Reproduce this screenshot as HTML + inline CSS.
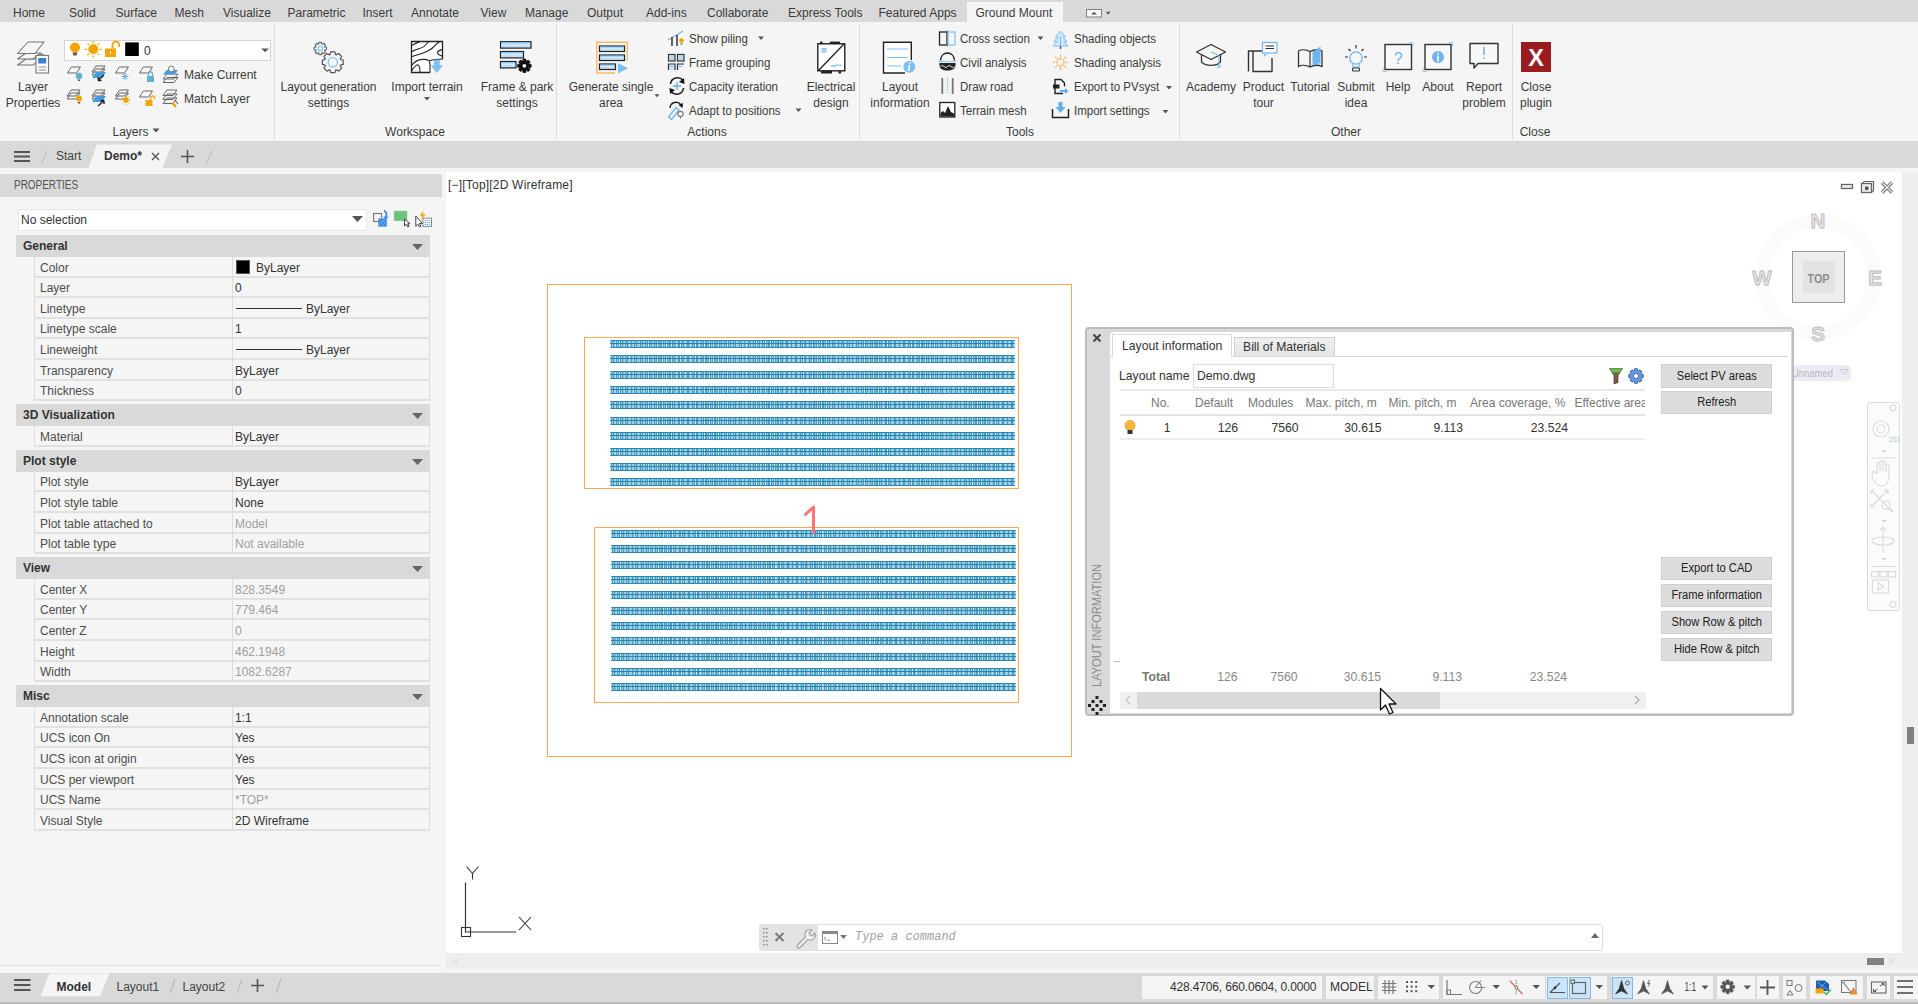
<!DOCTYPE html><html><head><meta charset="utf-8"><style>
html,body{margin:0;padding:0;width:1918px;height:1004px;overflow:hidden;background:#f5f5f5;}
body{position:relative;font-family:"Liberation Sans",sans-serif;}
.t{position:absolute;white-space:pre;line-height:14px;}
.r{position:absolute;}
svg.r{overflow:visible}
</style></head><body>
<div class="r" style="left:0px;top:0px;width:1918px;height:22px;background:#d9d9d9"></div>
<div class="r" style="left:967px;top:2px;width:96px;height:20px;background:#f5f5f5"></div>
<div class="t " style="left:13px;top:6px;font-size:12px;color:#3b3b3b;font-weight:normal;">Home</div>
<div class="t " style="left:69px;top:6px;font-size:12px;color:#3b3b3b;font-weight:normal;">Solid</div>
<div class="t " style="left:115.5px;top:6px;font-size:12px;color:#3b3b3b;font-weight:normal;">Surface</div>
<div class="t " style="left:174.5px;top:6px;font-size:12px;color:#3b3b3b;font-weight:normal;">Mesh</div>
<div class="t " style="left:223px;top:6px;font-size:12px;color:#3b3b3b;font-weight:normal;">Visualize</div>
<div class="t " style="left:287.5px;top:6px;font-size:12px;color:#3b3b3b;font-weight:normal;">Parametric</div>
<div class="t " style="left:362.5px;top:6px;font-size:12px;color:#3b3b3b;font-weight:normal;">Insert</div>
<div class="t " style="left:411px;top:6px;font-size:12px;color:#3b3b3b;font-weight:normal;">Annotate</div>
<div class="t " style="left:480.5px;top:6px;font-size:12px;color:#3b3b3b;font-weight:normal;">View</div>
<div class="t " style="left:525px;top:6px;font-size:12px;color:#3b3b3b;font-weight:normal;">Manage</div>
<div class="t " style="left:587px;top:6px;font-size:12px;color:#3b3b3b;font-weight:normal;">Output</div>
<div class="t " style="left:646px;top:6px;font-size:12px;color:#3b3b3b;font-weight:normal;">Add-ins</div>
<div class="t " style="left:707px;top:6px;font-size:12px;color:#3b3b3b;font-weight:normal;">Collaborate</div>
<div class="t " style="left:788px;top:6px;font-size:12px;color:#3b3b3b;font-weight:normal;">Express Tools</div>
<div class="t " style="left:878.5px;top:6px;font-size:12px;color:#3b3b3b;font-weight:normal;">Featured Apps</div>
<div class="t " style="left:975.5px;top:6px;font-size:12px;color:#3b3b3b;font-weight:normal;">Ground Mount</div>
<svg class="r" style="left:1086px;top:8px" width="26" height="12" viewBox="0 0 26 12"><rect x="0.5" y="1.5" width="15" height="7.5" fill="#f8f8f8" stroke="#777" stroke-width="0.9"/><path d="M5 6.5 L8 3.8 L11 6.5Z" fill="#555"/><path d="M20 3.8 L24.5 3.8 L22.2 6.8Z" fill="#555"/></svg>
<div class="r" style="left:0px;top:22px;width:1918px;height:119px;background:#f5f5f5"></div>
<div class="r" style="left:273.5px;top:24px;width:1px;height:116px;background:#dcdcdc"></div>
<div class="r" style="left:556px;top:24px;width:1px;height:116px;background:#dcdcdc"></div>
<div class="r" style="left:859px;top:24px;width:1px;height:116px;background:#dcdcdc"></div>
<div class="r" style="left:1179px;top:24px;width:1px;height:116px;background:#dcdcdc"></div>
<div class="r" style="left:1512px;top:24px;width:1px;height:116px;background:#dcdcdc"></div>
<div class="t" style="left:-117px;width:300px;text-align:center;top:79.6px;font-size:12px;color:#3b3b3b;font-weight:normal;">Layer</div>
<div class="t" style="left:-117px;width:300px;text-align:center;top:96.2px;font-size:12px;color:#3b3b3b;font-weight:normal;">Properties</div>
<div class="t" style="left:178.5px;width:300px;text-align:center;top:79.6px;font-size:12px;color:#3b3b3b;font-weight:normal;">Layout generation</div>
<div class="t" style="left:178.5px;width:300px;text-align:center;top:96.2px;font-size:12px;color:#3b3b3b;font-weight:normal;">settings</div>
<div class="t" style="left:277px;width:300px;text-align:center;top:79.6px;font-size:12px;color:#3b3b3b;font-weight:normal;">Import terrain</div>
<div class="t" style="left:367px;width:300px;text-align:center;top:79.6px;font-size:12px;color:#3b3b3b;font-weight:normal;">Frame &amp; park</div>
<div class="t" style="left:367px;width:300px;text-align:center;top:96.2px;font-size:12px;color:#3b3b3b;font-weight:normal;">settings</div>
<div class="t" style="left:461px;width:300px;text-align:center;top:79.6px;font-size:12px;color:#3b3b3b;font-weight:normal;">Generate single</div>
<div class="t" style="left:461px;width:300px;text-align:center;top:96.2px;font-size:12px;color:#3b3b3b;font-weight:normal;">area</div>
<div class="t" style="left:681px;width:300px;text-align:center;top:79.6px;font-size:12px;color:#3b3b3b;font-weight:normal;">Electrical</div>
<div class="t" style="left:681px;width:300px;text-align:center;top:96.2px;font-size:12px;color:#3b3b3b;font-weight:normal;">design</div>
<div class="t" style="left:750px;width:300px;text-align:center;top:79.6px;font-size:12px;color:#3b3b3b;font-weight:normal;">Layout</div>
<div class="t" style="left:750px;width:300px;text-align:center;top:96.2px;font-size:12px;color:#3b3b3b;font-weight:normal;">information</div>
<div class="t" style="left:1061px;width:300px;text-align:center;top:79.6px;font-size:12px;color:#3b3b3b;font-weight:normal;">Academy</div>
<div class="t" style="left:1113.5px;width:300px;text-align:center;top:79.6px;font-size:12px;color:#3b3b3b;font-weight:normal;">Product</div>
<div class="t" style="left:1113.5px;width:300px;text-align:center;top:96.2px;font-size:12px;color:#3b3b3b;font-weight:normal;">tour</div>
<div class="t" style="left:1160px;width:300px;text-align:center;top:79.6px;font-size:12px;color:#3b3b3b;font-weight:normal;">Tutorial</div>
<div class="t" style="left:1206px;width:300px;text-align:center;top:79.6px;font-size:12px;color:#3b3b3b;font-weight:normal;">Submit</div>
<div class="t" style="left:1206px;width:300px;text-align:center;top:96.2px;font-size:12px;color:#3b3b3b;font-weight:normal;">idea</div>
<div class="t" style="left:1248px;width:300px;text-align:center;top:79.6px;font-size:12px;color:#3b3b3b;font-weight:normal;">Help</div>
<div class="t" style="left:1288px;width:300px;text-align:center;top:79.6px;font-size:12px;color:#3b3b3b;font-weight:normal;">About</div>
<div class="t" style="left:1334px;width:300px;text-align:center;top:79.6px;font-size:12px;color:#3b3b3b;font-weight:normal;">Report</div>
<div class="t" style="left:1334px;width:300px;text-align:center;top:96.2px;font-size:12px;color:#3b3b3b;font-weight:normal;">problem</div>
<div class="t" style="left:1386px;width:300px;text-align:center;top:79.6px;font-size:12px;color:#3b3b3b;font-weight:normal;">Close</div>
<div class="t" style="left:1386px;width:300px;text-align:center;top:96.2px;font-size:12px;color:#3b3b3b;font-weight:normal;">plugin</div>
<div class="t" style="left:-19.5px;width:300px;text-align:center;top:124.8px;font-size:12px;color:#3b3b3b;font-weight:normal;">Layers</div>
<div class="t" style="left:265px;width:300px;text-align:center;top:124.8px;font-size:12px;color:#3b3b3b;font-weight:normal;">Workspace</div>
<div class="t" style="left:557px;width:300px;text-align:center;top:124.8px;font-size:12px;color:#3b3b3b;font-weight:normal;">Actions</div>
<div class="t" style="left:870px;width:300px;text-align:center;top:124.8px;font-size:12px;color:#3b3b3b;font-weight:normal;">Tools</div>
<div class="t" style="left:1196px;width:300px;text-align:center;top:124.8px;font-size:12px;color:#3b3b3b;font-weight:normal;">Other</div>
<div class="t" style="left:1385px;width:300px;text-align:center;top:124.8px;font-size:12px;color:#3b3b3b;font-weight:normal;">Close</div>
<div class="t " style="left:184px;top:67.8px;font-size:12px;color:#3b3b3b;font-weight:normal;">Make Current</div>
<div class="t " style="left:184px;top:91.6px;font-size:12px;color:#3b3b3b;font-weight:normal;">Match Layer</div>
<div class="t " style="left:688.5px;top:32.2px;font-size:12px;color:#3b3b3b;font-weight:normal;transform:scaleX(0.96);transform-origin:0 0">Show piling</div>
<div class="t " style="left:688.5px;top:56.099999999999994px;font-size:12px;color:#3b3b3b;font-weight:normal;transform:scaleX(0.96);transform-origin:0 0">Frame grouping</div>
<div class="t " style="left:688.5px;top:80.1px;font-size:12px;color:#3b3b3b;font-weight:normal;transform:scaleX(0.96);transform-origin:0 0">Capacity iteration</div>
<div class="t " style="left:688.5px;top:104.3px;font-size:12px;color:#3b3b3b;font-weight:normal;transform:scaleX(0.96);transform-origin:0 0">Adapt to positions</div>
<div class="t " style="left:960px;top:32.2px;font-size:12px;color:#3b3b3b;font-weight:normal;transform:scaleX(0.96);transform-origin:0 0">Cross section</div>
<div class="t " style="left:960px;top:56.099999999999994px;font-size:12px;color:#3b3b3b;font-weight:normal;transform:scaleX(0.96);transform-origin:0 0">Civil analysis</div>
<div class="t " style="left:960px;top:80.1px;font-size:12px;color:#3b3b3b;font-weight:normal;transform:scaleX(0.96);transform-origin:0 0">Draw road</div>
<div class="t " style="left:960px;top:104.3px;font-size:12px;color:#3b3b3b;font-weight:normal;transform:scaleX(0.96);transform-origin:0 0">Terrain mesh</div>
<div class="t " style="left:1073.5px;top:32.2px;font-size:12px;color:#3b3b3b;font-weight:normal;transform:scaleX(0.96);transform-origin:0 0">Shading objects</div>
<div class="t " style="left:1073.5px;top:56.099999999999994px;font-size:12px;color:#3b3b3b;font-weight:normal;transform:scaleX(0.96);transform-origin:0 0">Shading analysis</div>
<div class="t " style="left:1073.5px;top:80.1px;font-size:12px;color:#3b3b3b;font-weight:normal;transform:scaleX(0.96);transform-origin:0 0">Export to PVsyst</div>
<div class="t " style="left:1073.5px;top:104.3px;font-size:12px;color:#3b3b3b;font-weight:normal;transform:scaleX(0.96);transform-origin:0 0">Import settings</div>
<div class="r" style="left:63.5px;top:39.5px;width:207.5px;height:21px;background:#fff;border:1px solid #d4d4d4;box-sizing:border-box"></div>
<div class="t " style="left:144px;top:43.5px;font-size:12px;color:#333;font-weight:normal;">0</div>
<svg class="r" style="left:0;top:0" width="1918" height="141" viewBox="0 0 1918 141"><g fill="#f5f5f5" stroke="#777" stroke-width="1.1" stroke-linejoin="round"><path d="M17.5 65 L26 59 H41 L33 65Z"/><path d="M17.5 59 L26 53 H41 L33 59Z"/><path d="M17.5 53.5 L28 42 H44 L35 53.5Z"/></g><rect x="36" y="55.5" width="12.5" height="17.5" fill="#fff" stroke="#777" stroke-width="1.1"/><rect x="38.2" y="58" width="8" height="5.5" fill="#3a7fd8"/><path d="M38.5 67 H46 M38.5 70 H46" stroke="#888" stroke-width="1"/><rect x="39" y="53.8" width="5" height="2" fill="#888"/><circle cx="75" cy="47.5" r="5" fill="#f5a300"/><path d="M72.5 52.5 H77.5 L76.5 55.5 H73.5Z" fill="#555"/><circle cx="93.3" cy="49.3" r="5" fill="#f5a300"/><g stroke="#f5a300" stroke-width="1.2"><path d="M93.3 41 V43.2 M93.3 55.4 V57.6 M85 49.3 H87.2 M99.4 49.3 H101.6 M87.4 43.4 L88.9 44.9 M97.7 53.7 L99.2 55.2 M87.4 55.2 L88.9 53.7 M97.7 44.9 L99.2 43.4"/></g><rect x="105" y="48.5" width="11" height="8.5" fill="#f5a300"/><path d="M112.5 48.5 V45 a3.3 3.3 0 0 1 6.6 0 V47" fill="none" stroke="#f5a300" stroke-width="1.8"/><rect x="110" y="51" width="1" height="3" fill="#fff"/><rect x="125.2" y="42.4" width="13.6" height="13.6" fill="#000"/><path d="M261.3 48.5 h7.6 l-3.8 3.8z" fill="#555"/><path d="M67.5 73 L71.5 67 H80.5 L76.5 73Z" fill="none" stroke="#666" stroke-width="1"/><circle cx="79" cy="76" r="3.2" fill="#5fb3cf"/><path d="M77.5 79.5 H80.5 L80 81 H78Z" fill="#555"/><path d="M92 72 L96 66 H105 L101 72Z" fill="none" stroke="#666" stroke-width="1"/><path d="M92 75 L96 69 H105 L101 75Z" fill="none" stroke="#666" stroke-width="1"/><path d="M92 78 L96 72 H106 L102 78Z" fill="#4a9be0"/><path d="M104 75 L98 80.5 M98 80.5 L101.5 80.5 M98 80.5 L98.5 77" stroke="#222" stroke-width="1.4"/><path d="M115.5 73 L119.5 67 H128.5 L124.5 73Z" fill="none" stroke="#666" stroke-width="1"/><g stroke="#5fb3cf" stroke-width="1"><path d="M125 73 V80 M121.5 76.5 H128.5 M122.5 74 L127.5 79 M127.5 74 L122.5 79"/></g><path d="M139.5 73 L143.5 67 H152.5 L148.5 73Z" fill="none" stroke="#666" stroke-width="1"/><rect x="147" y="76" width="7" height="6" fill="#5fb3cf"/><path d="M148.5 76 V74 a2 2 0 0 1 4 0 V76" fill="none" stroke="#5fb3cf" stroke-width="1.3"/><path d="M163 79 L167 74 H178 L174 79Z" fill="none" stroke="#666" stroke-width="1"/><path d="M163 82.5 L167 77.5 H178 L174 82.5Z" fill="none" stroke="#666" stroke-width="1"/><path d="M163 74.5 L166.5 70 H178 L174.5 74.5Z" fill="#4a9be0"/><circle cx="171.3" cy="69" r="2.9" fill="#f5f5f5" stroke="#777" stroke-width="1"/><path d="M67 96 L71 90 H80 L76 96Z" fill="none" stroke="#666" stroke-width="1"/><path d="M67 99 L71 93 H80 L76 99Z" fill="none" stroke="#666" stroke-width="1"/><circle cx="79" cy="98.5" r="3" fill="#f5a300"/><path d="M77.5 102 H80.5 L80 103.5 H78Z" fill="#555"/><path d="M92 96 L96 90 H105 L101 96Z" fill="none" stroke="#666" stroke-width="1"/><path d="M92 99 L96 93 H105 L101 99Z" fill="none" stroke="#666" stroke-width="1"/><path d="M92 102 L96 96 H106 L102 102Z" fill="#4a9be0"/><path d="M98 106 L104 100.5 M104 100.5 H100.5 M104 100.5 V104" stroke="#222" stroke-width="1.4"/><path d="M115.5 96 L119.5 90 H128.5 L124.5 96Z" fill="none" stroke="#666" stroke-width="1"/><path d="M115.5 99 L119.5 93 H128.5 L124.5 99Z" fill="none" stroke="#666" stroke-width="1"/><circle cx="126" cy="100" r="2.8" fill="#f5a300"/><g stroke="#f5a300" stroke-width="0.9"><path d="M126 95 V96.3 M126 103.7 V105 M121 100 H122.3 M129.7 100 H131 M122.5 96.5 L123.4 97.4 M128.6 102.6 L129.5 103.5 M122.5 103.5 L123.4 102.6 M128.6 97.4 L129.5 96.5"/></g><path d="M139.5 97 L143.5 91 H152.5 L148.5 97Z" fill="none" stroke="#666" stroke-width="1"/><rect x="145.5" y="100" width="7" height="6" fill="#f5a300"/><path d="M150.5 100 V98 a2 2 0 0 1 4 0 V99" fill="none" stroke="#f5a300" stroke-width="1.3"/><path d="M163 95.5 L167 90 H177 L173 95.5Z" fill="none" stroke="#666" stroke-width="1"/><path d="M163 99.5 L167 94 H177 L173 99.5Z" fill="none" stroke="#666" stroke-width="1"/><path d="M163 103.5 L167 98 H177 L173 103.5Z" fill="none" stroke="#666" stroke-width="1"/><path d="M172.5 103 L176 107" stroke="#f5a300" stroke-width="2.5"/><path d="M175 100 L178 104" stroke="#444" stroke-width="1"/><path d="M324.62 46.91 L326.47 47.24 L326.47 49.76 L324.62 50.09 L324.47 50.43 L325.55 51.98 L323.78 53.75 L322.23 52.67 L321.89 52.82 L321.56 54.67 L319.04 54.67 L318.71 52.82 L318.37 52.67 L316.82 53.75 L315.05 51.98 L316.13 50.43 L315.98 50.09 L314.13 49.76 L314.13 47.24 L315.98 46.91 L316.13 46.57 L315.05 45.02 L316.82 43.25 L318.37 44.33 L318.71 44.18 L319.04 42.33 L321.56 42.33 L321.89 44.18 L322.23 44.33 L323.78 43.25 L325.55 45.02 L324.47 46.57Z" fill="#f5f5f5" stroke="#666" stroke-width="1.1" stroke-linejoin="round"/><circle cx="320.3" cy="48.5" r="2.3" fill="none" stroke="#7cc0f5" stroke-width="1.1"/><path d="M340.50 59.47 L343.19 60.18 L343.19 64.42 L340.50 65.13 L340.24 65.74 L341.64 68.15 L338.65 71.14 L336.24 69.74 L335.63 70.00 L334.92 72.69 L330.68 72.69 L329.97 70.00 L329.36 69.74 L326.95 71.14 L323.96 68.15 L325.36 65.74 L325.10 65.13 L322.41 64.42 L322.41 60.18 L325.10 59.47 L325.36 58.86 L323.96 56.45 L326.95 53.46 L329.36 54.86 L329.97 54.60 L330.68 51.91 L334.92 51.91 L335.63 54.60 L336.24 54.86 L338.65 53.46 L341.64 56.45 L340.24 58.86Z" fill="#f5f5f5" stroke="#555" stroke-width="1.2" stroke-linejoin="round"/><circle cx="332.8" cy="62.3" r="4.6" fill="none" stroke="#7cc0f5" stroke-width="1.3"/><path d="M430 72.5 H411.5 V41.5 H442.5 V59" fill="#fff" stroke="#222" stroke-width="1.3"/><g fill="none" stroke="#222" stroke-width="1.1"><path d="M411.6 45.6 C414 44 417 42.5 420 41.6"/><path d="M411.6 51.8 C416 49 421 48.5 423.8 46.6 C425.8 45 427 43 428.8 41.6"/><path d="M411.6 56.8 C416 55 421 54 425 52.3 C429 50.5 431 49.5 433 47.5 C435 45.5 437 43 440 41.6"/><path d="M411.6 65.4 C414 62.5 417 60 420.5 59.6 C424 59.2 427 59.5 429 60.5 C430 61.5 430 63 430 66 V72.5"/><path d="M411.6 70.8 C413.5 68 415.5 65 417.5 64.8 C419.5 64.8 420 68 420 72.5"/><path d="M442.8 49.6 C440.5 50 437.5 51 437.5 52.5 C437.5 54 440 55.5 442.8 56.2"/><path d="M430 60.5 C433 59.8 437 59.3 442.8 59"/></g><path d="M433.8 59.8 H439.8 V65.3 H443 L436.8 73 L430.6 65.3 H433.8Z" fill="#7cc0f5"/><path d="M424 97 h6 l-3.0 3.5z" fill="#555"/><rect x="500.5" y="41.7" width="30.5" height="6.4" fill="#bfe0fa" stroke="#222" stroke-width="1.2"/><path d="M502.0 44.900000000000006 H529.5" stroke="#fff" stroke-width="0.8" stroke-dasharray="1.3 1.3"/><path d="M501.5 42.7 H530.0" stroke="#7cc0f5" stroke-width="1.2" stroke-dasharray="2.2 0.8"/><rect x="500.5" y="51.5" width="23" height="6.4" fill="#bfe0fa" stroke="#222" stroke-width="1.2"/><path d="M502.0 54.7 H522.0" stroke="#fff" stroke-width="0.8" stroke-dasharray="1.3 1.3"/><path d="M501.5 52.5 H522.5" stroke="#7cc0f5" stroke-width="1.2" stroke-dasharray="2.2 0.8"/><rect x="500.5" y="61.5" width="15.5" height="6.4" fill="#bfe0fa" stroke="#222" stroke-width="1.2"/><path d="M502.0 64.7 H514.5" stroke="#fff" stroke-width="0.8" stroke-dasharray="1.3 1.3"/><path d="M501.5 62.5 H515.0" stroke="#7cc0f5" stroke-width="1.2" stroke-dasharray="2.2 0.8"/><path d="M529.00 64.11 L531.16 64.42 L531.16 67.18 L529.00 67.49 L528.85 67.86 L530.16 69.61 L528.21 71.56 L526.46 70.25 L526.09 70.40 L525.78 72.56 L523.02 72.56 L522.71 70.40 L522.34 70.25 L520.59 71.56 L518.64 69.61 L519.95 67.86 L519.80 67.49 L517.64 67.18 L517.64 64.42 L519.80 64.11 L519.95 63.74 L518.64 61.99 L520.59 60.04 L522.34 61.35 L522.71 61.20 L523.02 59.04 L525.78 59.04 L526.09 61.20 L526.46 61.35 L528.21 60.04 L530.16 61.99 L528.85 63.74Z" fill="#111" stroke="#111" stroke-width="0.8" stroke-linejoin="round"/><circle cx="524.4" cy="65.8" r="1.9" fill="#f5f5f5"/><path d="M615 73 H596.8 V42.3 H627.3 V60.5" fill="none" stroke="#ffb862" stroke-width="1.4"/><rect x="599.5" y="46" width="25" height="5.5" fill="#bfe0fa" stroke="#222" stroke-width="1.2"/><path d="M601.0 48.75 H623.0" stroke="#fff" stroke-width="0.8" stroke-dasharray="1.3 1.3"/><path d="M600.5 47 H623.5" stroke="#7cc0f5" stroke-width="1.2" stroke-dasharray="2.2 0.8"/><rect x="599.5" y="55" width="25" height="5.5" fill="#bfe0fa" stroke="#222" stroke-width="1.2"/><path d="M601.0 57.75 H623.0" stroke="#fff" stroke-width="0.8" stroke-dasharray="1.3 1.3"/><path d="M600.5 56 H623.5" stroke="#7cc0f5" stroke-width="1.2" stroke-dasharray="2.2 0.8"/><rect x="599.5" y="64" width="16" height="5.5" fill="#bfe0fa" stroke="#222" stroke-width="1.2"/><path d="M601.0 66.75 H614.0" stroke="#fff" stroke-width="0.8" stroke-dasharray="1.3 1.3"/><path d="M600.5 65 H614.5" stroke="#7cc0f5" stroke-width="1.2" stroke-dasharray="2.2 0.8"/><path d="M618 63 L628 68.2 L618 73.5Z" fill="#7cc0f5"/><path d="M654.5 94.3 h5 l-2.5 3z" fill="#555"/><path d="M668 40 L683 31" stroke="#6bb6f0" stroke-width="1.3"/><path d="M672 37 V46 M677 35 V46" stroke="#333" stroke-width="1.5"/><circle cx="681.5" cy="40.5" r="2.3" fill="#f5a300"/><rect x="680.5" y="43" width="2" height="2" fill="#7a7"/><path d="M758 36.5 h6 l-3.0 3.5z" fill="#555"/><g fill="#cfe7fb" stroke="#333" stroke-width="1.2"><rect x="668.5" y="54.5" width="6.5" height="6.5"/><rect x="677.5" y="54.5" width="6.5" height="6.5"/><path d="M668.5 70 V64 H675 V70 M677.5 70 V64 H684"/></g><path d="M670 57 H673.5 M670 59 H673.5 M679 57 H682.5 M679 59 H682.5 M670 66.5 H673.5 M679 66.5 H682.5" stroke="#7cc0f5" stroke-width="0.8"/><path d="M670.5 84 A7 7 0 0 1 683 80.5" fill="none" stroke="#222" stroke-width="1.6"/><path d="M684 78 L684.5 84 L679 82Z" fill="#111"/><path d="M683.5 88 A7 7 0 0 1 671 91.5" fill="none" stroke="#222" stroke-width="1.6"/><path d="M670 94 L669.5 88 L675 90Z" fill="#111"/><path d="M677 82 V90 M673 86 H681" stroke="#5fb0ee" stroke-width="1.3"/><path d="M670 108 A6 6 0 0 1 681 105" fill="none" stroke="#222" stroke-width="1.4"/><path d="M683 103 L682.5 108 L678.5 105Z" fill="#111"/><path d="M668.5 117 L676 107.5 L679 110 L671.5 119.5Z" fill="none" stroke="#6bb6f0" stroke-width="1.3"/><circle cx="680.5" cy="114" r="2.6" fill="none" stroke="#777" stroke-width="1.1"/><path d="M680.5 116.5 V118.5" stroke="#777"/><path d="M795.5 108.5 h6 l-3.0 3.5z" fill="#555"/><rect x="817.8" y="43.8" width="27" height="27" fill="#fff" stroke="#222" stroke-width="1.4"/><path d="M818.5 70.5 L844 44" stroke="#222" stroke-width="1.3"/><rect x="820" y="41.6" width="2.6" height="2.4" fill="#222"/><rect x="830" y="41.6" width="10" height="2.4" fill="#222"/><rect x="821" y="71" width="11" height="2.5" fill="#222"/><rect x="838.5" y="71" width="2.6" height="2.5" fill="#222"/><path d="M821.5 49 H826.5 M821.5 51.5 H826.5" stroke="#5fb0ee" stroke-width="1.3"/><path d="M831 66.5 C833 64 834 68 836 65.5 C838 63 839 67 841 65" fill="none" stroke="#5fb0ee" stroke-width="1.1"/><path d="M905 73 H883.5 V42.3 H911.3 V60" fill="#fff" stroke="#222" stroke-width="1.4"/><path d="M887 49 H908 M887 57.5 H908 M887 66 H901" stroke="#7cc0f5" stroke-width="1.1"/><circle cx="909.3" cy="66.7" r="6" fill="#7cc0f5"/><path d="M909.8 63 V63.5 M909.3 65.5 L908.7 70.5" stroke="#fff" stroke-width="1.6" stroke-linecap="round"/><rect x="939.5" y="32" width="7.5" height="13" fill="none" stroke="#222" stroke-width="1.3"/><rect x="948" y="32" width="7" height="13" fill="none" stroke="#7cc0f5" stroke-width="1.2"/><path d="M947.5 30 V47" stroke="#888" stroke-width="1" stroke-dasharray="1.5 1"/><path d="M1037.5 36.5 h6 l-3.0 3.5z" fill="#555"/><path d="M940.5 60.5 C940.5 55.5 944 53 947.5 53 C951 53 954.5 55.5 954.5 60.5" fill="none" stroke="#222" stroke-width="1.3"/><path d="M939 61.5 H956" stroke="#7cc0f5" stroke-width="1.3" stroke-dasharray="1.5 0.7"/><path d="M939.5 63 H955.5 V65.5 C955.5 68.5 952 70.5 947.5 70.5 C943 70.5 939.5 68.5 939.5 65.5Z" fill="#222"/><path d="M940.5 66.5 q1.75 -2.2 3.5 0 t3.5 0 t3.5 0 t3.5 0" fill="none" stroke="#fff" stroke-width="0.9"/><path d="M942.3 78 V94 M952.7 78 V94" stroke="#777" stroke-width="1.8"/><path d="M947.5 78 V94" stroke="#7cc0f5" stroke-width="1" stroke-dasharray="1.5 1.2"/><rect x="939.8" y="102.5" width="15" height="14.5" fill="#fff" stroke="#222" stroke-width="1.3"/><path d="M940.5 116.5 V113 L943 111 L945 113 L948 106 L951 112 L954.5 114 V116.5Z" fill="#222"/><path d="M1060.5 31 L1065.5 37 H1063 L1067 41.5 H1064 L1068 46 H1053 L1057 41.5 H1054 L1058 37 H1055.5Z" fill="#cfe7fb" stroke="#7cc0f5" stroke-width="1"/><path d="M1060.5 36 V47.5" stroke="#7cc0f5" stroke-width="1"/><path d="M1060.5 46 V49" stroke="#555" stroke-width="1.4"/><circle cx="1060.5" cy="62.2" r="3.6" fill="none" stroke="#ffb36a" stroke-width="1.1"/><g stroke="#ffb36a" stroke-width="1.1"><path d="M1060.5 54.5 V57.3 M1060.5 67.1 V69.9 M1052.8 62.2 H1055.6 M1065.4 62.2 H1068.2 M1055 56.7 L1057 58.7 M1064 65.7 L1066 67.7 M1055 67.7 L1057 65.7 M1064 58.7 L1066 56.7"/></g><path d="M1063 93.5 H1055 V79.5 H1061 L1064.5 83 V86.5" fill="none" stroke="#222" stroke-width="1.4"/><rect x="1053" y="84.5" width="6.5" height="4" fill="#222"/><path d="M1060 90 H1065 V88 L1068.5 91 L1065 94 V92 H1060Z" fill="#5fb0ee"/><path d="M1166 86 h6 l-3.0 3.5z" fill="#555"/><path d="M1052.5 109 V117.5 H1068.5 V109" fill="none" stroke="#222" stroke-width="1.5"/><path d="M1058.5 102 H1062.5 V107 H1065.5 L1060.5 113 L1055.5 107 H1058.5Z" fill="#5fb0ee"/><path d="M1162.5 110 h6 l-3.0 3.5z" fill="#555"/><path d="M1201.5 55 V62 C1206 66.5 1216 66.5 1220.5 62 V55" fill="#f5f5f5" stroke="#333" stroke-width="1.3"/><path d="M1196.5 52 L1211 44.5 L1225.5 52 L1211 59.5Z" fill="#f5f5f5" stroke="#333" stroke-width="1.3" stroke-linejoin="round"/><path d="M1211 52 L1219 55.5 V65" fill="none" stroke="#6bb6f0" stroke-width="1"/><circle cx="1219" cy="66.3" r="1.3" fill="none" stroke="#6bb6f0"/><path d="M1248.5 71.5 V51 H1262 M1253 51 V71.5 H1272 V58" fill="none" stroke="#333" stroke-width="1.4"/><rect x="1262.5" y="42.5" width="14.5" height="10.5" fill="#fff" stroke="#6bb6f0" stroke-width="1.2"/><path d="M1265 53 L1264.5 56 L1268 53" fill="#fff" stroke="#6bb6f0" stroke-width="1"/><path d="M1265.5 46 H1274 M1265.5 48.5 H1274" stroke="#333" stroke-width="1"/><path d="M1298.5 51 C1301 49.5 1306 49.5 1310 51.5 C1314 49.5 1319 49.5 1322 51 V66.5 C1319 65 1314 65 1310 67 C1306 65 1301 65 1298.5 66.5Z" fill="none" stroke="#333" stroke-width="1.3"/><path d="M1310 51.5 V67" stroke="#333" stroke-width="1.2"/><path d="M1312.5 52 L1320.5 46.5 V63 L1312.5 65.5Z" fill="#6bb6f0"/><circle cx="1356" cy="58" r="6.2" fill="none" stroke="#6bb6f0" stroke-width="1.3"/><path d="M1353 63 V67 H1359 V63" fill="none" stroke="#6bb6f0" stroke-width="1.2"/><rect x="1352.5" y="68" width="7" height="3" rx="1" fill="none" stroke="#333" stroke-width="1.2"/><path d="M1356 45 V48.5 M1345 57 H1348 M1364 57 H1367 M1348.5 49 L1350.5 51 M1363.5 49 L1361.5 51" stroke="#333" stroke-width="1.2"/><rect x="1385" y="44.5" width="26.5" height="25" fill="#f8f8f8" stroke="#333" stroke-width="1.4"/><text x="1398.3" y="64" font-family="Liberation Sans" font-size="16" fill="#6bb6f0" text-anchor="middle">?</text><path d="M1409 42.5 H1413 V46.5 M1383 67.5 V71.5 H1387" fill="none" stroke="#9ccff5" stroke-width="1.1"/><rect x="1425" y="44.5" width="26" height="25" fill="#f8f8f8" stroke="#333" stroke-width="1.4"/><circle cx="1438" cy="57" r="6" fill="#6bb6f0"/><path d="M1438 53.5 V54 M1438 56 V61" stroke="#fff" stroke-width="1.6" stroke-linecap="round"/><path d="M1448.5 42.5 H1452.5 V46.5 M1423 67.5 V71.5 H1427" fill="none" stroke="#9ccff5" stroke-width="1.1"/><path d="M1470 43.5 H1498 V63.5 H1478 L1474 68 V63.5 H1470Z" fill="#f8f8f8" stroke="#333" stroke-width="1.4" stroke-linejoin="round"/><path d="M1484 47 V55 M1484 57.5 V59" stroke="#6bb6f0" stroke-width="1.6"/><rect x="1521" y="42" width="30" height="30" fill="#9b1c1f"/><text x="1536" y="65.8" font-family="Liberation Sans" font-weight="bold" font-size="23.5" fill="#fff" text-anchor="middle">X</text><path d="M152.5 128.5 h7 l-3.5 4z" fill="#555"/></svg>
<div class="r" style="left:0px;top:141px;width:1918px;height:27px;background:#d9d9d9"></div>
<svg class="r" style="left:0;top:141px" width="300" height="27"><path d="M88.5 27 L97 3.5 L172 3.5 L162.5 27Z" fill="#f5f5f5"/><path d="M41 24 L47 9.5" stroke="#bdbdbd"/><path d="M212 9.5 L206 24" stroke="#bdbdbd"/></svg>
<svg class="r" style="left:14px;top:151px" width="16" height="11" viewBox="0 0 16 11"><rect y="0" width="16" height="2" fill="#555"/><rect y="4.5" width="16" height="2" fill="#555"/><rect y="9" width="16" height="2" fill="#555"/></svg>
<div class="t " style="left:56px;top:149px;font-size:12px;color:#444;font-weight:normal;">Start</div>
<div class="t " style="left:104px;top:149px;font-size:12px;color:#333;font-weight:bold;">Demo*</div>
<svg class="r" style="left:151px;top:152px" width="9" height="9" viewBox="0 0 9 9"><path d="M1 1 L8 8 M8 1 L1 8" stroke="#555" stroke-width="1.4"/></svg>
<svg class="r" style="left:180px;top:149px" width="15" height="15" viewBox="0 0 15 15"><path d="M7.5 1 V14 M1 7.5 H14" stroke="#555" stroke-width="1.6"/></svg>
<div class="r" style="left:0px;top:168px;width:446px;height:805px;background:#f5f5f5"></div>
<div class="r" style="left:0px;top:174px;width:441.5px;height:23px;background:#d9d9d9;border-top-right-radius:2px"></div>
<div class="t" style="left:14px;top:178px;font-size:12px;color:#555;transform:scaleX(0.83);transform-origin:0 0">PROPERTIES</div>
<div class="r" style="left:17.5px;top:208.5px;width:349px;height:22px;background:#fff;border:1px solid #e6e6e6;box-sizing:border-box"></div>
<div class="t " style="left:21px;top:212.7px;font-size:12px;color:#333;font-weight:normal;">No selection</div>
<svg class="r" style="left:352px;top:216px" width="11" height="6" viewBox="0 0 11 6"><path d="M0 0 L11 0 L5.5 6Z" fill="#555"/></svg>
<svg class="r" style="left:370px;top:208px" width="66" height="22" viewBox="0 0 66 22"><g transform="translate(-370,-208)"><rect x="373.6" y="213.5" width="8" height="8" fill="#f5f5f5" stroke="#777" stroke-width="1.1"/><rect x="378.3" y="218.4" width="8.5" height="8.3" fill="#3d8de0"/><path d="M379 225 L385 219 M381.5 226.5 L386.5 221.5" stroke="#8cc2f5" stroke-width="0.6"/><path d="M384 210.5 C386.5 212 387 214.5 386 217" fill="none" stroke="#3d8de0" stroke-width="1.8"/><path d="M383.2 216.5 L388.6 216.5 L385.6 220Z" fill="#3d8de0"/><rect x="394.3" y="211.3" width="12.5" height="9.2" fill="#6cc27a" stroke="#5ab86a" stroke-width="0.9" stroke-dasharray="1.2 0.8"/><path d="M404.5 219 V226 L406.3 224.3 L407.8 227 L409 226.3 L407.6 223.8 H410Z" fill="#fff" stroke="#333" stroke-width="0.9" stroke-linejoin="round"/><path d="M415.8 216 V226.3 L418 224.2 L419.5 227 L421 226.3 L419.5 223.5 H422.5Z" fill="#fff" stroke="#333" stroke-width="0.9" stroke-linejoin="round"/><path d="M423.5 211 L419.5 215.8 H422.5 L420.5 219.5 L426 214.5 H423Z" fill="#f5a300"/><rect x="423" y="218.2" width="8.5" height="8.2" fill="#fff" stroke="#888" stroke-width="1"/><path d="M424.5 220.5 H430 M424.5 222.5 H430 M424.5 224.5 H430" stroke="#5fb0ee" stroke-width="1" stroke-dasharray="1.6 0.6"/></g></svg>
<div class="r" style="left:16px;top:235px;width:413.5px;height:22px;background:#d9d9d9"></div>
<div class="t " style="left:23px;top:239px;font-size:12px;color:#333;font-weight:bold;">General</div>
<svg class="r" style="left:412px;top:244px" width="11" height="6" viewBox="0 0 11 6"><path d="M0 0 L11 0 L5.5 6Z" fill="#666"/></svg>
<div class="r" style="left:34px;top:257px;width:395.5px;height:20.6px;background:#f5f5f5;border-bottom:2px solid #e1e1e1;border-left:1px solid #dedede;border-right:1px solid #dedede;box-sizing:border-box"></div>
<div class="r" style="left:232px;top:257px;width:1px;height:20.6px;background:#dcdcdc"></div>
<div class="t " style="left:40px;top:260.5px;font-size:12px;color:#4d4d4d;font-weight:normal;">Color</div>
<div class="r" style="left:236px;top:260px;width:14px;height:14px;background:#000;border:1px solid #555;box-sizing:border-box"></div>
<div class="t " style="left:256px;top:260.5px;font-size:12px;color:#333;font-weight:normal;">ByLayer</div>
<div class="r" style="left:34px;top:277.6px;width:395.5px;height:20.6px;background:#f5f5f5;border-bottom:2px solid #e1e1e1;border-left:1px solid #dedede;border-right:1px solid #dedede;box-sizing:border-box"></div>
<div class="r" style="left:232px;top:277.6px;width:1px;height:20.6px;background:#dcdcdc"></div>
<div class="t " style="left:40px;top:281.1px;font-size:12px;color:#4d4d4d;font-weight:normal;">Layer</div>
<div class="t " style="left:235px;top:281.1px;font-size:12px;color:#333;font-weight:normal;">0</div>
<div class="r" style="left:34px;top:298.20000000000005px;width:395.5px;height:20.6px;background:#f5f5f5;border-bottom:2px solid #e1e1e1;border-left:1px solid #dedede;border-right:1px solid #dedede;box-sizing:border-box"></div>
<div class="r" style="left:232px;top:298.20000000000005px;width:1px;height:20.6px;background:#dcdcdc"></div>
<div class="t " style="left:40px;top:301.70000000000005px;font-size:12px;color:#4d4d4d;font-weight:normal;">Linetype</div>
<div class="r" style="left:236px;top:307.70000000000005px;width:66px;height:1.2px;background:#333"></div>
<div class="t " style="left:306px;top:301.70000000000005px;font-size:12px;color:#333;font-weight:normal;">ByLayer</div>
<div class="r" style="left:34px;top:318.80000000000007px;width:395.5px;height:20.6px;background:#f5f5f5;border-bottom:2px solid #e1e1e1;border-left:1px solid #dedede;border-right:1px solid #dedede;box-sizing:border-box"></div>
<div class="r" style="left:232px;top:318.80000000000007px;width:1px;height:20.6px;background:#dcdcdc"></div>
<div class="t " style="left:40px;top:322.30000000000007px;font-size:12px;color:#4d4d4d;font-weight:normal;">Linetype scale</div>
<div class="t " style="left:235px;top:322.30000000000007px;font-size:12px;color:#333;font-weight:normal;">1</div>
<div class="r" style="left:34px;top:339.4000000000001px;width:395.5px;height:20.6px;background:#f5f5f5;border-bottom:2px solid #e1e1e1;border-left:1px solid #dedede;border-right:1px solid #dedede;box-sizing:border-box"></div>
<div class="r" style="left:232px;top:339.4000000000001px;width:1px;height:20.6px;background:#dcdcdc"></div>
<div class="t " style="left:40px;top:342.9000000000001px;font-size:12px;color:#4d4d4d;font-weight:normal;">Lineweight</div>
<div class="r" style="left:236px;top:348.9000000000001px;width:66px;height:1.2px;background:#333"></div>
<div class="t " style="left:306px;top:342.9000000000001px;font-size:12px;color:#333;font-weight:normal;">ByLayer</div>
<div class="r" style="left:34px;top:360.0000000000001px;width:395.5px;height:20.6px;background:#f5f5f5;border-bottom:2px solid #e1e1e1;border-left:1px solid #dedede;border-right:1px solid #dedede;box-sizing:border-box"></div>
<div class="r" style="left:232px;top:360.0000000000001px;width:1px;height:20.6px;background:#dcdcdc"></div>
<div class="t " style="left:40px;top:363.5000000000001px;font-size:12px;color:#4d4d4d;font-weight:normal;">Transparency</div>
<div class="t " style="left:235px;top:363.5000000000001px;font-size:12px;color:#333;font-weight:normal;">ByLayer</div>
<div class="r" style="left:34px;top:380.60000000000014px;width:395.5px;height:20.6px;background:#f5f5f5;border-bottom:2px solid #e1e1e1;border-left:1px solid #dedede;border-right:1px solid #dedede;box-sizing:border-box"></div>
<div class="r" style="left:232px;top:380.60000000000014px;width:1px;height:20.6px;background:#dcdcdc"></div>
<div class="t " style="left:40px;top:384.10000000000014px;font-size:12px;color:#4d4d4d;font-weight:normal;">Thickness</div>
<div class="t " style="left:235px;top:384.10000000000014px;font-size:12px;color:#333;font-weight:normal;">0</div>
<div class="r" style="left:16px;top:404.20000000000016px;width:413.5px;height:22px;background:#d9d9d9"></div>
<div class="t " style="left:23px;top:408.20000000000016px;font-size:12px;color:#333;font-weight:bold;">3D Visualization</div>
<svg class="r" style="left:412px;top:413.20000000000016px" width="11" height="6" viewBox="0 0 11 6"><path d="M0 0 L11 0 L5.5 6Z" fill="#666"/></svg>
<div class="r" style="left:34px;top:426.20000000000016px;width:395.5px;height:20.6px;background:#f5f5f5;border-bottom:2px solid #e1e1e1;border-left:1px solid #dedede;border-right:1px solid #dedede;box-sizing:border-box"></div>
<div class="r" style="left:232px;top:426.20000000000016px;width:1px;height:20.6px;background:#dcdcdc"></div>
<div class="t " style="left:40px;top:429.70000000000016px;font-size:12px;color:#4d4d4d;font-weight:normal;">Material</div>
<div class="t " style="left:235px;top:429.70000000000016px;font-size:12px;color:#333;font-weight:normal;">ByLayer</div>
<div class="r" style="left:16px;top:449.8000000000002px;width:413.5px;height:22px;background:#d9d9d9"></div>
<div class="t " style="left:23px;top:453.8000000000002px;font-size:12px;color:#333;font-weight:bold;">Plot style</div>
<svg class="r" style="left:412px;top:458.8000000000002px" width="11" height="6" viewBox="0 0 11 6"><path d="M0 0 L11 0 L5.5 6Z" fill="#666"/></svg>
<div class="r" style="left:34px;top:471.8000000000002px;width:395.5px;height:20.6px;background:#f5f5f5;border-bottom:2px solid #e1e1e1;border-left:1px solid #dedede;border-right:1px solid #dedede;box-sizing:border-box"></div>
<div class="r" style="left:232px;top:471.8000000000002px;width:1px;height:20.6px;background:#dcdcdc"></div>
<div class="t " style="left:40px;top:475.3000000000002px;font-size:12px;color:#4d4d4d;font-weight:normal;">Plot style</div>
<div class="t " style="left:235px;top:475.3000000000002px;font-size:12px;color:#333;font-weight:normal;">ByLayer</div>
<div class="r" style="left:34px;top:492.4000000000002px;width:395.5px;height:20.6px;background:#f5f5f5;border-bottom:2px solid #e1e1e1;border-left:1px solid #dedede;border-right:1px solid #dedede;box-sizing:border-box"></div>
<div class="r" style="left:232px;top:492.4000000000002px;width:1px;height:20.6px;background:#dcdcdc"></div>
<div class="t " style="left:40px;top:495.9000000000002px;font-size:12px;color:#4d4d4d;font-weight:normal;">Plot style table</div>
<div class="t " style="left:235px;top:495.9000000000002px;font-size:12px;color:#333;font-weight:normal;">None</div>
<div class="r" style="left:34px;top:513.0000000000002px;width:395.5px;height:20.6px;background:#f5f5f5;border-bottom:2px solid #e1e1e1;border-left:1px solid #dedede;border-right:1px solid #dedede;box-sizing:border-box"></div>
<div class="r" style="left:232px;top:513.0000000000002px;width:1px;height:20.6px;background:#dcdcdc"></div>
<div class="t " style="left:40px;top:516.5000000000002px;font-size:12px;color:#4d4d4d;font-weight:normal;">Plot table attached to</div>
<div class="t " style="left:235px;top:516.5000000000002px;font-size:12px;color:#a0a0a0;font-weight:normal;">Model</div>
<div class="r" style="left:34px;top:533.6000000000003px;width:395.5px;height:20.6px;background:#f5f5f5;border-bottom:2px solid #e1e1e1;border-left:1px solid #dedede;border-right:1px solid #dedede;box-sizing:border-box"></div>
<div class="r" style="left:232px;top:533.6000000000003px;width:1px;height:20.6px;background:#dcdcdc"></div>
<div class="t " style="left:40px;top:537.1000000000003px;font-size:12px;color:#4d4d4d;font-weight:normal;">Plot table type</div>
<div class="t " style="left:235px;top:537.1000000000003px;font-size:12px;color:#a0a0a0;font-weight:normal;">Not available</div>
<div class="r" style="left:16px;top:557.2000000000003px;width:413.5px;height:22px;background:#d9d9d9"></div>
<div class="t " style="left:23px;top:561.2000000000003px;font-size:12px;color:#333;font-weight:bold;">View</div>
<svg class="r" style="left:412px;top:566.2000000000003px" width="11" height="6" viewBox="0 0 11 6"><path d="M0 0 L11 0 L5.5 6Z" fill="#666"/></svg>
<div class="r" style="left:34px;top:579.2000000000003px;width:395.5px;height:20.6px;background:#f5f5f5;border-bottom:2px solid #e1e1e1;border-left:1px solid #dedede;border-right:1px solid #dedede;box-sizing:border-box"></div>
<div class="r" style="left:232px;top:579.2000000000003px;width:1px;height:20.6px;background:#dcdcdc"></div>
<div class="t " style="left:40px;top:582.7000000000003px;font-size:12px;color:#4d4d4d;font-weight:normal;">Center X</div>
<div class="t " style="left:235px;top:582.7000000000003px;font-size:12px;color:#a0a0a0;font-weight:normal;">828.3549</div>
<div class="r" style="left:34px;top:599.8000000000003px;width:395.5px;height:20.6px;background:#f5f5f5;border-bottom:2px solid #e1e1e1;border-left:1px solid #dedede;border-right:1px solid #dedede;box-sizing:border-box"></div>
<div class="r" style="left:232px;top:599.8000000000003px;width:1px;height:20.6px;background:#dcdcdc"></div>
<div class="t " style="left:40px;top:603.3000000000003px;font-size:12px;color:#4d4d4d;font-weight:normal;">Center Y</div>
<div class="t " style="left:235px;top:603.3000000000003px;font-size:12px;color:#a0a0a0;font-weight:normal;">779.464</div>
<div class="r" style="left:34px;top:620.4000000000003px;width:395.5px;height:20.6px;background:#f5f5f5;border-bottom:2px solid #e1e1e1;border-left:1px solid #dedede;border-right:1px solid #dedede;box-sizing:border-box"></div>
<div class="r" style="left:232px;top:620.4000000000003px;width:1px;height:20.6px;background:#dcdcdc"></div>
<div class="t " style="left:40px;top:623.9000000000003px;font-size:12px;color:#4d4d4d;font-weight:normal;">Center Z</div>
<div class="t " style="left:235px;top:623.9000000000003px;font-size:12px;color:#a0a0a0;font-weight:normal;">0</div>
<div class="r" style="left:34px;top:641.0000000000003px;width:395.5px;height:20.6px;background:#f5f5f5;border-bottom:2px solid #e1e1e1;border-left:1px solid #dedede;border-right:1px solid #dedede;box-sizing:border-box"></div>
<div class="r" style="left:232px;top:641.0000000000003px;width:1px;height:20.6px;background:#dcdcdc"></div>
<div class="t " style="left:40px;top:644.5000000000003px;font-size:12px;color:#4d4d4d;font-weight:normal;">Height</div>
<div class="t " style="left:235px;top:644.5000000000003px;font-size:12px;color:#a0a0a0;font-weight:normal;">462.1948</div>
<div class="r" style="left:34px;top:661.6000000000004px;width:395.5px;height:20.6px;background:#f5f5f5;border-bottom:2px solid #e1e1e1;border-left:1px solid #dedede;border-right:1px solid #dedede;box-sizing:border-box"></div>
<div class="r" style="left:232px;top:661.6000000000004px;width:1px;height:20.6px;background:#dcdcdc"></div>
<div class="t " style="left:40px;top:665.1000000000004px;font-size:12px;color:#4d4d4d;font-weight:normal;">Width</div>
<div class="t " style="left:235px;top:665.1000000000004px;font-size:12px;color:#a0a0a0;font-weight:normal;">1082.6287</div>
<div class="r" style="left:16px;top:685.2000000000004px;width:413.5px;height:22px;background:#d9d9d9"></div>
<div class="t " style="left:23px;top:689.2000000000004px;font-size:12px;color:#333;font-weight:bold;">Misc</div>
<svg class="r" style="left:412px;top:694.2000000000004px" width="11" height="6" viewBox="0 0 11 6"><path d="M0 0 L11 0 L5.5 6Z" fill="#666"/></svg>
<div class="r" style="left:34px;top:707.2000000000004px;width:395.5px;height:20.6px;background:#f5f5f5;border-bottom:2px solid #e1e1e1;border-left:1px solid #dedede;border-right:1px solid #dedede;box-sizing:border-box"></div>
<div class="r" style="left:232px;top:707.2000000000004px;width:1px;height:20.6px;background:#dcdcdc"></div>
<div class="t " style="left:40px;top:710.7000000000004px;font-size:12px;color:#4d4d4d;font-weight:normal;">Annotation scale</div>
<div class="t " style="left:235px;top:710.7000000000004px;font-size:12px;color:#333;font-weight:normal;">1:1</div>
<div class="r" style="left:34px;top:727.8000000000004px;width:395.5px;height:20.6px;background:#f5f5f5;border-bottom:2px solid #e1e1e1;border-left:1px solid #dedede;border-right:1px solid #dedede;box-sizing:border-box"></div>
<div class="r" style="left:232px;top:727.8000000000004px;width:1px;height:20.6px;background:#dcdcdc"></div>
<div class="t " style="left:40px;top:731.3000000000004px;font-size:12px;color:#4d4d4d;font-weight:normal;">UCS icon On</div>
<div class="t " style="left:235px;top:731.3000000000004px;font-size:12px;color:#333;font-weight:normal;">Yes</div>
<div class="r" style="left:34px;top:748.4000000000004px;width:395.5px;height:20.6px;background:#f5f5f5;border-bottom:2px solid #e1e1e1;border-left:1px solid #dedede;border-right:1px solid #dedede;box-sizing:border-box"></div>
<div class="r" style="left:232px;top:748.4000000000004px;width:1px;height:20.6px;background:#dcdcdc"></div>
<div class="t " style="left:40px;top:751.9000000000004px;font-size:12px;color:#4d4d4d;font-weight:normal;">UCS icon at origin</div>
<div class="t " style="left:235px;top:751.9000000000004px;font-size:12px;color:#333;font-weight:normal;">Yes</div>
<div class="r" style="left:34px;top:769.0000000000005px;width:395.5px;height:20.6px;background:#f5f5f5;border-bottom:2px solid #e1e1e1;border-left:1px solid #dedede;border-right:1px solid #dedede;box-sizing:border-box"></div>
<div class="r" style="left:232px;top:769.0000000000005px;width:1px;height:20.6px;background:#dcdcdc"></div>
<div class="t " style="left:40px;top:772.5000000000005px;font-size:12px;color:#4d4d4d;font-weight:normal;">UCS per viewport</div>
<div class="t " style="left:235px;top:772.5000000000005px;font-size:12px;color:#333;font-weight:normal;">Yes</div>
<div class="r" style="left:34px;top:789.6000000000005px;width:395.5px;height:20.6px;background:#f5f5f5;border-bottom:2px solid #e1e1e1;border-left:1px solid #dedede;border-right:1px solid #dedede;box-sizing:border-box"></div>
<div class="r" style="left:232px;top:789.6000000000005px;width:1px;height:20.6px;background:#dcdcdc"></div>
<div class="t " style="left:40px;top:793.1000000000005px;font-size:12px;color:#4d4d4d;font-weight:normal;">UCS Name</div>
<div class="t " style="left:235px;top:793.1000000000005px;font-size:12px;color:#a0a0a0;font-weight:normal;">*TOP*</div>
<div class="r" style="left:34px;top:810.2000000000005px;width:395.5px;height:20.6px;background:#f5f5f5;border-bottom:2px solid #e1e1e1;border-left:1px solid #dedede;border-right:1px solid #dedede;box-sizing:border-box"></div>
<div class="r" style="left:232px;top:810.2000000000005px;width:1px;height:20.6px;background:#dcdcdc"></div>
<div class="t " style="left:40px;top:813.7000000000005px;font-size:12px;color:#4d4d4d;font-weight:normal;">Visual Style</div>
<div class="t " style="left:235px;top:813.7000000000005px;font-size:12px;color:#333;font-weight:normal;">2D Wireframe</div>
<div class="r" style="left:0px;top:964.5px;width:440px;height:1.2px;background:#e3e3e3"></div>
<div class="r" style="left:446px;top:172px;width:1456px;height:781px;background:#fff"></div>
<div class="r" style="left:1902px;top:172px;width:16px;height:797px;background:#eeeeee"></div>
<div class="r" style="left:446px;top:953px;width:1456px;height:16px;background:#eeeeee"></div>
<div class="r" style="left:1906.8px;top:727px;width:7.2px;height:17.3px;background:#808080"></div>
<div class="r" style="left:1867px;top:957.5px;width:17px;height:7.5px;background:#808080"></div>
<svg class="r" style="left:452px;top:957px" width="7" height="9" viewBox="0 0 7 9"><path d="M6 0 L0 4.5 L6 9Z" fill="#e4e4e4"/></svg>
<svg class="r" style="left:1889px;top:957px" width="7" height="9" viewBox="0 0 7 9"><path d="M0 0 L6 4.5 L0 9Z" fill="#e4e4e4"/></svg>
<div class="t " style="left:448px;top:178px;font-size:12px;color:#333;font-weight:normal;letter-spacing:0.2px">[−][Top][2D Wireframe]</div>
<svg class="r" style="left:1840px;top:180.5px" width="56" height="13" viewBox="0 0 56 13"><rect x="1.5" y="3.5" width="11" height="4" fill="#eee" stroke="#666" stroke-width="1.3"/><rect x="21.5" y="2.5" width="10" height="9" fill="#eee" stroke="#666" stroke-width="1.3"/><path d="M23 2 L24 0.5 H33.5 V9.5 L32 11" fill="none" stroke="#666" stroke-width="1.2"/><rect x="25" y="5.5" width="3.5" height="3.5" fill="#555"/><path d="M42 1.5 L52 11.5 M52 1.5 L42 11.5" stroke="#666" stroke-width="3.2"/><path d="M42 1.5 L52 11.5 M52 1.5 L42 11.5" stroke="#eee" stroke-width="1.4"/></svg>
<div class="r" style="left:547px;top:284px;width:524.5px;height:473px;border:1px solid #ffa556;box-sizing:border-box"></div>
<div class="r" style="left:584px;top:337px;width:435px;height:152px;border:1px solid #ffa556;box-sizing:border-box"></div>
<div class="r" style="left:593.5px;top:527px;width:425.5px;height:176px;border:1px solid #ffa556;box-sizing:border-box"></div>
<div class="r" style="left:610px;top:339.8px;width:405px;height:8px;background-color:#2f8fba;background-image:linear-gradient(180deg,#2788b5 0 1px,rgba(255,255,255,.12) 1px 3.4px,#2585b3 3.4px 4.4px,rgba(255,255,255,.12) 4.4px 7px,#2788b5 7px 8px),repeating-linear-gradient(90deg,rgba(255,255,255,.6) 0 1px,rgba(255,255,255,0) 1px 4.7px),repeating-linear-gradient(90deg,rgba(255,255,255,.42) 0 0.9px,rgba(255,255,255,0) 0.9px 2.25px);border-radius:1px"></div>
<div class="r" style="left:610px;top:355.19px;width:405px;height:8px;background-color:#2f8fba;background-image:linear-gradient(180deg,#2788b5 0 1px,rgba(255,255,255,.12) 1px 3.4px,#2585b3 3.4px 4.4px,rgba(255,255,255,.12) 4.4px 7px,#2788b5 7px 8px),repeating-linear-gradient(90deg,rgba(255,255,255,.6) 0 1px,rgba(255,255,255,0) 1px 4.7px),repeating-linear-gradient(90deg,rgba(255,255,255,.42) 0 0.9px,rgba(255,255,255,0) 0.9px 2.25px);border-radius:1px"></div>
<div class="r" style="left:610px;top:370.58000000000004px;width:405px;height:8px;background-color:#2f8fba;background-image:linear-gradient(180deg,#2788b5 0 1px,rgba(255,255,255,.12) 1px 3.4px,#2585b3 3.4px 4.4px,rgba(255,255,255,.12) 4.4px 7px,#2788b5 7px 8px),repeating-linear-gradient(90deg,rgba(255,255,255,.6) 0 1px,rgba(255,255,255,0) 1px 4.7px),repeating-linear-gradient(90deg,rgba(255,255,255,.42) 0 0.9px,rgba(255,255,255,0) 0.9px 2.25px);border-radius:1px"></div>
<div class="r" style="left:610px;top:385.97px;width:405px;height:8px;background-color:#2f8fba;background-image:linear-gradient(180deg,#2788b5 0 1px,rgba(255,255,255,.12) 1px 3.4px,#2585b3 3.4px 4.4px,rgba(255,255,255,.12) 4.4px 7px,#2788b5 7px 8px),repeating-linear-gradient(90deg,rgba(255,255,255,.6) 0 1px,rgba(255,255,255,0) 1px 4.7px),repeating-linear-gradient(90deg,rgba(255,255,255,.42) 0 0.9px,rgba(255,255,255,0) 0.9px 2.25px);border-radius:1px"></div>
<div class="r" style="left:610px;top:401.36px;width:405px;height:8px;background-color:#2f8fba;background-image:linear-gradient(180deg,#2788b5 0 1px,rgba(255,255,255,.12) 1px 3.4px,#2585b3 3.4px 4.4px,rgba(255,255,255,.12) 4.4px 7px,#2788b5 7px 8px),repeating-linear-gradient(90deg,rgba(255,255,255,.6) 0 1px,rgba(255,255,255,0) 1px 4.7px),repeating-linear-gradient(90deg,rgba(255,255,255,.42) 0 0.9px,rgba(255,255,255,0) 0.9px 2.25px);border-radius:1px"></div>
<div class="r" style="left:610px;top:416.75px;width:405px;height:8px;background-color:#2f8fba;background-image:linear-gradient(180deg,#2788b5 0 1px,rgba(255,255,255,.12) 1px 3.4px,#2585b3 3.4px 4.4px,rgba(255,255,255,.12) 4.4px 7px,#2788b5 7px 8px),repeating-linear-gradient(90deg,rgba(255,255,255,.6) 0 1px,rgba(255,255,255,0) 1px 4.7px),repeating-linear-gradient(90deg,rgba(255,255,255,.42) 0 0.9px,rgba(255,255,255,0) 0.9px 2.25px);border-radius:1px"></div>
<div class="r" style="left:610px;top:432.14px;width:405px;height:8px;background-color:#2f8fba;background-image:linear-gradient(180deg,#2788b5 0 1px,rgba(255,255,255,.12) 1px 3.4px,#2585b3 3.4px 4.4px,rgba(255,255,255,.12) 4.4px 7px,#2788b5 7px 8px),repeating-linear-gradient(90deg,rgba(255,255,255,.6) 0 1px,rgba(255,255,255,0) 1px 4.7px),repeating-linear-gradient(90deg,rgba(255,255,255,.42) 0 0.9px,rgba(255,255,255,0) 0.9px 2.25px);border-radius:1px"></div>
<div class="r" style="left:610px;top:447.53000000000003px;width:405px;height:8px;background-color:#2f8fba;background-image:linear-gradient(180deg,#2788b5 0 1px,rgba(255,255,255,.12) 1px 3.4px,#2585b3 3.4px 4.4px,rgba(255,255,255,.12) 4.4px 7px,#2788b5 7px 8px),repeating-linear-gradient(90deg,rgba(255,255,255,.6) 0 1px,rgba(255,255,255,0) 1px 4.7px),repeating-linear-gradient(90deg,rgba(255,255,255,.42) 0 0.9px,rgba(255,255,255,0) 0.9px 2.25px);border-radius:1px"></div>
<div class="r" style="left:610px;top:462.92px;width:405px;height:8px;background-color:#2f8fba;background-image:linear-gradient(180deg,#2788b5 0 1px,rgba(255,255,255,.12) 1px 3.4px,#2585b3 3.4px 4.4px,rgba(255,255,255,.12) 4.4px 7px,#2788b5 7px 8px),repeating-linear-gradient(90deg,rgba(255,255,255,.6) 0 1px,rgba(255,255,255,0) 1px 4.7px),repeating-linear-gradient(90deg,rgba(255,255,255,.42) 0 0.9px,rgba(255,255,255,0) 0.9px 2.25px);border-radius:1px"></div>
<div class="r" style="left:610px;top:478.31px;width:405px;height:8px;background-color:#2f8fba;background-image:linear-gradient(180deg,#2788b5 0 1px,rgba(255,255,255,.12) 1px 3.4px,#2585b3 3.4px 4.4px,rgba(255,255,255,.12) 4.4px 7px,#2788b5 7px 8px),repeating-linear-gradient(90deg,rgba(255,255,255,.6) 0 1px,rgba(255,255,255,0) 1px 4.7px),repeating-linear-gradient(90deg,rgba(255,255,255,.42) 0 0.9px,rgba(255,255,255,0) 0.9px 2.25px);border-radius:1px"></div>
<div class="r" style="left:611px;top:530.0px;width:405px;height:8px;background-color:#2f8fba;background-image:linear-gradient(180deg,#2788b5 0 1px,rgba(255,255,255,.12) 1px 3.4px,#2585b3 3.4px 4.4px,rgba(255,255,255,.12) 4.4px 7px,#2788b5 7px 8px),repeating-linear-gradient(90deg,rgba(255,255,255,.6) 0 1px,rgba(255,255,255,0) 1px 4.7px),repeating-linear-gradient(90deg,rgba(255,255,255,.42) 0 0.9px,rgba(255,255,255,0) 0.9px 2.25px);border-radius:1px"></div>
<div class="r" style="left:611px;top:545.32px;width:405px;height:8px;background-color:#2f8fba;background-image:linear-gradient(180deg,#2788b5 0 1px,rgba(255,255,255,.12) 1px 3.4px,#2585b3 3.4px 4.4px,rgba(255,255,255,.12) 4.4px 7px,#2788b5 7px 8px),repeating-linear-gradient(90deg,rgba(255,255,255,.6) 0 1px,rgba(255,255,255,0) 1px 4.7px),repeating-linear-gradient(90deg,rgba(255,255,255,.42) 0 0.9px,rgba(255,255,255,0) 0.9px 2.25px);border-radius:1px"></div>
<div class="r" style="left:611px;top:560.64px;width:405px;height:8px;background-color:#2f8fba;background-image:linear-gradient(180deg,#2788b5 0 1px,rgba(255,255,255,.12) 1px 3.4px,#2585b3 3.4px 4.4px,rgba(255,255,255,.12) 4.4px 7px,#2788b5 7px 8px),repeating-linear-gradient(90deg,rgba(255,255,255,.6) 0 1px,rgba(255,255,255,0) 1px 4.7px),repeating-linear-gradient(90deg,rgba(255,255,255,.42) 0 0.9px,rgba(255,255,255,0) 0.9px 2.25px);border-radius:1px"></div>
<div class="r" style="left:611px;top:575.96px;width:405px;height:8px;background-color:#2f8fba;background-image:linear-gradient(180deg,#2788b5 0 1px,rgba(255,255,255,.12) 1px 3.4px,#2585b3 3.4px 4.4px,rgba(255,255,255,.12) 4.4px 7px,#2788b5 7px 8px),repeating-linear-gradient(90deg,rgba(255,255,255,.6) 0 1px,rgba(255,255,255,0) 1px 4.7px),repeating-linear-gradient(90deg,rgba(255,255,255,.42) 0 0.9px,rgba(255,255,255,0) 0.9px 2.25px);border-radius:1px"></div>
<div class="r" style="left:611px;top:591.28px;width:405px;height:8px;background-color:#2f8fba;background-image:linear-gradient(180deg,#2788b5 0 1px,rgba(255,255,255,.12) 1px 3.4px,#2585b3 3.4px 4.4px,rgba(255,255,255,.12) 4.4px 7px,#2788b5 7px 8px),repeating-linear-gradient(90deg,rgba(255,255,255,.6) 0 1px,rgba(255,255,255,0) 1px 4.7px),repeating-linear-gradient(90deg,rgba(255,255,255,.42) 0 0.9px,rgba(255,255,255,0) 0.9px 2.25px);border-radius:1px"></div>
<div class="r" style="left:611px;top:606.6px;width:405px;height:8px;background-color:#2f8fba;background-image:linear-gradient(180deg,#2788b5 0 1px,rgba(255,255,255,.12) 1px 3.4px,#2585b3 3.4px 4.4px,rgba(255,255,255,.12) 4.4px 7px,#2788b5 7px 8px),repeating-linear-gradient(90deg,rgba(255,255,255,.6) 0 1px,rgba(255,255,255,0) 1px 4.7px),repeating-linear-gradient(90deg,rgba(255,255,255,.42) 0 0.9px,rgba(255,255,255,0) 0.9px 2.25px);border-radius:1px"></div>
<div class="r" style="left:611px;top:621.92px;width:405px;height:8px;background-color:#2f8fba;background-image:linear-gradient(180deg,#2788b5 0 1px,rgba(255,255,255,.12) 1px 3.4px,#2585b3 3.4px 4.4px,rgba(255,255,255,.12) 4.4px 7px,#2788b5 7px 8px),repeating-linear-gradient(90deg,rgba(255,255,255,.6) 0 1px,rgba(255,255,255,0) 1px 4.7px),repeating-linear-gradient(90deg,rgba(255,255,255,.42) 0 0.9px,rgba(255,255,255,0) 0.9px 2.25px);border-radius:1px"></div>
<div class="r" style="left:611px;top:637.24px;width:405px;height:8px;background-color:#2f8fba;background-image:linear-gradient(180deg,#2788b5 0 1px,rgba(255,255,255,.12) 1px 3.4px,#2585b3 3.4px 4.4px,rgba(255,255,255,.12) 4.4px 7px,#2788b5 7px 8px),repeating-linear-gradient(90deg,rgba(255,255,255,.6) 0 1px,rgba(255,255,255,0) 1px 4.7px),repeating-linear-gradient(90deg,rgba(255,255,255,.42) 0 0.9px,rgba(255,255,255,0) 0.9px 2.25px);border-radius:1px"></div>
<div class="r" style="left:611px;top:652.56px;width:405px;height:8px;background-color:#2f8fba;background-image:linear-gradient(180deg,#2788b5 0 1px,rgba(255,255,255,.12) 1px 3.4px,#2585b3 3.4px 4.4px,rgba(255,255,255,.12) 4.4px 7px,#2788b5 7px 8px),repeating-linear-gradient(90deg,rgba(255,255,255,.6) 0 1px,rgba(255,255,255,0) 1px 4.7px),repeating-linear-gradient(90deg,rgba(255,255,255,.42) 0 0.9px,rgba(255,255,255,0) 0.9px 2.25px);border-radius:1px"></div>
<div class="r" style="left:611px;top:667.88px;width:405px;height:8px;background-color:#2f8fba;background-image:linear-gradient(180deg,#2788b5 0 1px,rgba(255,255,255,.12) 1px 3.4px,#2585b3 3.4px 4.4px,rgba(255,255,255,.12) 4.4px 7px,#2788b5 7px 8px),repeating-linear-gradient(90deg,rgba(255,255,255,.6) 0 1px,rgba(255,255,255,0) 1px 4.7px),repeating-linear-gradient(90deg,rgba(255,255,255,.42) 0 0.9px,rgba(255,255,255,0) 0.9px 2.25px);border-radius:1px"></div>
<div class="r" style="left:611px;top:683.2px;width:405px;height:8px;background-color:#2f8fba;background-image:linear-gradient(180deg,#2788b5 0 1px,rgba(255,255,255,.12) 1px 3.4px,#2585b3 3.4px 4.4px,rgba(255,255,255,.12) 4.4px 7px,#2788b5 7px 8px),repeating-linear-gradient(90deg,rgba(255,255,255,.6) 0 1px,rgba(255,255,255,0) 1px 4.7px),repeating-linear-gradient(90deg,rgba(255,255,255,.42) 0 0.9px,rgba(255,255,255,0) 0.9px 2.25px);border-radius:1px"></div>
<svg class="r" style="left:803px;top:505px" width="14" height="29" viewBox="0 0 14 29"><path d="M2.5 9.5 L10.5 2 L10.5 27.5" fill="none" stroke="#ff7474" stroke-width="3" stroke-linecap="round" stroke-linejoin="round"/></svg>
<svg class="r" style="left:458px;top:862px" width="80" height="78" viewBox="0 0 80 78"><path d="M8.5 4.5 L14.5 11.5 L20.5 4.5 M14.5 11.5 V17.5" fill="none" stroke="#333" stroke-width="1.1"/><path d="M7.5 20.5 V70 H58" fill="none" stroke="#333" stroke-width="1.2"/><rect x="3.5" y="65.5" width="9" height="9" fill="none" stroke="#333" stroke-width="1.1"/><path d="M61 55 L73 68 M73 55 L61 68" stroke="#333" stroke-width="1.1"/></svg>
<svg class="r" style="left:1750px;top:205px" width="140" height="140" viewBox="0 0 140 140"><circle cx="68" cy="72" r="56" fill="none" stroke="#fbfbfb" stroke-width="14"/><rect x="42.5" y="46.5" width="52" height="51" fill="#ededed" stroke="#999" stroke-width="1"/><rect x="53" y="56" width="32" height="32" fill="#e3e3e3"/><text x="57.5" y="78" font-family="Liberation Sans" font-weight="bold" font-size="13" fill="#8f8f8f" textLength="22" lengthAdjust="spacingAndGlyphs">TOP</text><g font-family="Liberation Sans" font-weight="bold" font-size="20.5" fill="#e6e6e6" stroke="#bebebe" stroke-width="1" text-anchor="middle"><text x="68" y="23">N</text><text x="12" y="80">W</text><text x="125" y="80">E</text><text x="68" y="136">S</text></g></svg>
<div class="r" style="left:1793px;top:364.5px;width:58px;height:16px;background:#ececf4;border-radius:4px"></div>
<div class="t" style="left:1792px;top:366px;font-size:11px;color:#b8b8c0;transform:scaleX(0.86);transform-origin:0 0">Unnamed</div>
<svg class="r" style="left:1840px;top:369px" width="9" height="6" viewBox="0 0 9 6"><path d="M0.5 0.5 H8.5 L4.5 5.5Z" fill="none" stroke="#c8c8d0"/></svg>
<div class="r" style="left:1867.3px;top:402.2px;width:32.4px;height:209px;border:1px solid #dadada;border-radius:3px;background:#fbfbfb;box-sizing:border-box"></div>
<svg class="r" style="left:0px;top:0px" width="1918" height="1004" viewBox="0 0 1918 1004"><g fill="none" stroke="#dcdcdc" stroke-width="1.2"><circle cx="1893" cy="407.8" r="3"/><circle cx="1893" cy="604.5" r="3"/><path d="M1871 458 H1896 M1871 566.5 H1896"/><circle cx="1881" cy="429" r="8"/><circle cx="1881" cy="429" r="4"/><path d="M1875 482 C1872 478 1871 474 1873 472 C1874 471 1876 472 1877 474 V464 C1877 462 1880 462 1880 464 V471 V462 C1880 460 1883 460 1883 462 V471 V463 C1883 461 1886 461 1886 463 V472 V466 C1886 464 1889 464 1889 466 V476 C1889 482 1886 486 1882 486 C1879 486 1877 485 1875 482Z"/><path d="M1871 490 L1888 507 M1888 490 L1871 507 M1871 490 H1875 M1871 490 V494 M1888 490 H1884 M1888 490 V494 M1871 507 H1875 M1871 507 V503"/><circle cx="1886" cy="505" r="4.2"/><path d="M1889 508 L1893 512" stroke-width="2"/><path d="M1883 527 V553 M1879.5 531 L1883 527 L1886.5 531"/><ellipse cx="1883" cy="541" rx="11" ry="4"/><rect x="1871.5" y="571.5" width="7" height="5.5"/><rect x="1880" y="571.5" width="7" height="5.5"/><rect x="1888.5" y="571.5" width="7" height="5.5"/><rect x="1872.5" y="580" width="16" height="13"/><path d="M1878 583 V590 L1884 586.5Z"/></g><text x="1889" y="442" font-family="Liberation Sans" font-size="8" fill="#a8cbea">2D</text><g fill="#d0d0d0"><path d="M1881.5 450 H1886.5 L1884 452.5Z"/><path d="M1881.5 520 H1886.5 L1884 522.5Z"/><path d="M1881.5 558 H1886.5 L1884 560.5Z"/></g></svg>
<div class="r" style="left:1085px;top:327px;width:709px;height:389px;background:#d9d9d9;border:2px solid #bcbcbc;border-radius:4px;box-sizing:border-box"></div>
<div class="r" style="left:1110px;top:332px;width:681px;height:381px;background:#fff;border-top-left-radius:4px"></div>
<svg class="r" style="left:1092px;top:333px" width="10" height="10" viewBox="0 0 10 10"><path d="M1.5 1.5 L8.5 8.5 M8.5 1.5 L1.5 8.5" stroke="#444" stroke-width="2"/></svg>
<svg class="r" style="left:1088px;top:562px" width="18" height="127" viewBox="0 0 18 127"><text transform="translate(13,125) rotate(-90)" font-family="Liberation Sans" font-size="12" fill="#8c8c8c" textLength="123" lengthAdjust="spacingAndGlyphs">LAYOUT INFORMATION</text></svg>
<svg class="r" style="left:1088px;top:696px" width="19" height="19" viewBox="0 0 19 19"><g fill="#222"><rect x="7.5" y="0" width="3" height="3"/><rect x="3.5" y="4" width="3" height="3"/><rect x="11.5" y="4" width="3" height="3"/><rect x="0" y="8" width="3" height="3"/><rect x="7.5" y="8" width="3" height="3"/><rect x="15" y="8" width="3" height="3"/><rect x="3.5" y="12" width="3" height="3"/><rect x="11.5" y="12" width="3" height="3"/><rect x="7.5" y="16" width="3" height="3"/></g></svg>
<div class="r" style="left:1110px;top:355.5px;width:678px;height:1.5px;background:#dadada"></div>
<div class="r" style="left:1112px;top:334px;width:120px;height:23px;background:#fff;border:1px solid #d9d9d9;border-bottom:none;box-sizing:border-box"></div>
<div class="r" style="left:1234px;top:336.5px;width:101px;height:19.5px;background:linear-gradient(#f0f0f0,#e4e4e4);border:1px solid #cfcfcf;border-bottom:none;box-sizing:border-box"></div>
<div class="t " style="left:1122px;top:338.5px;font-size:12.2px;color:#333;font-weight:normal;">Layout information</div>
<div class="t " style="left:1243px;top:340px;font-size:12.2px;color:#333;font-weight:normal;">Bill of Materials</div>
<div class="t " style="left:1119px;top:369px;font-size:12.2px;color:#333;font-weight:normal;">Layout name</div>
<div class="r" style="left:1192.5px;top:364px;width:141px;height:23.5px;background:#fff;border:1px solid #dcdcdc;box-sizing:border-box"></div>
<div class="t " style="left:1197px;top:369px;font-size:12.2px;color:#333;font-weight:normal;">Demo.dwg</div>
<div class="r" style="left:1120px;top:388.5px;width:525px;height:2px;background:#e8e8e8"></div>
<div class="r" style="left:1120px;top:414px;width:525px;height:2px;background:#e4e4e4"></div>
<div class="r" style="left:1120px;top:438px;width:525px;height:1.5px;background:#ececec"></div>
<div class="r" style="left:1120px;top:390px;width:525px;height:24px;overflow:hidden">
<div class="t " style="left:31px;top:6px;font-size:12px;color:#777;font-weight:normal;">No.</div>
<div class="t " style="left:75px;top:6px;font-size:12px;color:#777;font-weight:normal;">Default</div>
<div class="t " style="left:128px;top:6px;font-size:12px;color:#777;font-weight:normal;">Modules</div>
<div class="t " style="left:185.5px;top:6px;font-size:12px;color:#777;font-weight:normal;">Max. pitch, m</div>
<div class="t " style="left:268.5px;top:6px;font-size:12px;color:#777;font-weight:normal;">Min. pitch, m</div>
<div class="t " style="left:350px;top:6px;font-size:12px;color:#777;font-weight:normal;">Area coverage, %</div>
<div class="t " style="left:454.5px;top:6px;font-size:12px;color:#777;font-weight:normal;">Effective area</div>
</div>
<div class="t" style="left:1070.5px;width:100px;text-align:right;top:421px;font-size:12.2px;color:#333">1</div>
<div class="t" style="left:1138px;width:100px;text-align:right;top:421px;font-size:12.2px;color:#333">126</div>
<div class="t" style="left:1198.5px;width:100px;text-align:right;top:421px;font-size:12.2px;color:#333">7560</div>
<div class="t" style="left:1281.5px;width:100px;text-align:right;top:421px;font-size:12.2px;color:#333">30.615</div>
<div class="t" style="left:1363px;width:100px;text-align:right;top:421px;font-size:12.2px;color:#333">9.113</div>
<div class="t" style="left:1468px;width:100px;text-align:right;top:421px;font-size:12.2px;color:#333">23.524</div>
<svg class="r" style="left:1123px;top:419px" width="14" height="17" viewBox="0 0 14 17"><circle cx="7" cy="6.5" r="5" fill="#f7b53b" stroke="#d89a20" stroke-width="0.8"/><rect x="4.5" y="11" width="5" height="4" fill="#333"/></svg>
<div class="t " style="left:1142px;top:670px;font-size:12.2px;color:#777;font-weight:bold;">Total</div>
<div class="t" style="left:1137.5px;width:100px;text-align:right;top:670px;font-size:12.2px;color:#888">126</div>
<div class="t" style="left:1197.5px;width:100px;text-align:right;top:670px;font-size:12.2px;color:#888">7560</div>
<div class="t" style="left:1281px;width:100px;text-align:right;top:670px;font-size:12.2px;color:#888">30.615</div>
<div class="t" style="left:1362px;width:100px;text-align:right;top:670px;font-size:12.2px;color:#888">9.113</div>
<div class="t" style="left:1467px;width:100px;text-align:right;top:670px;font-size:12.2px;color:#888">23.524</div>
<div class="r" style="left:1114px;top:660.5px;width:6px;height:1px;background:#bbb"></div>
<div class="r" style="left:1120px;top:691.5px;width:526px;height:17px;background:#f0f0f0"></div>
<div class="r" style="left:1137px;top:691.5px;width:303px;height:17px;background:#dadada"></div>
<svg class="r" style="left:1124px;top:695px" width="8" height="10" viewBox="0 0 8 10"><path d="M6 1 L2 5 L6 9" fill="none" stroke="#c4c4c4" stroke-width="1.2"/></svg>
<svg class="r" style="left:1633px;top:695px" width="8" height="10" viewBox="0 0 8 10"><path d="M2 1 L6 5 L2 9" fill="none" stroke="#aaa" stroke-width="1.2"/></svg>
<svg class="r" style="left:1608px;top:367px" width="38" height="18" viewBox="0 0 38 18"><path d="M1.5 1.5 H14.5 L10 8.5 V15.5 L6 17 V8.5Z" fill="#7a5a45" stroke="#4d3a2c" stroke-width="0.7" stroke-linejoin="round"/><path d="M1.5 1.5 H14.5 L12 5 C10 6.5 9 4.5 8 6 C7 4.5 6 6.5 4 5Z" fill="#62c24e"/><path d="M32.98 7.17 L35.25 7.52 L35.25 10.48 L32.98 10.83 L32.81 11.23 L34.17 13.08 L32.08 15.17 L30.23 13.81 L29.83 13.98 L29.48 16.25 L26.52 16.25 L26.17 13.98 L25.77 13.81 L23.92 15.17 L21.83 13.08 L23.19 11.23 L23.02 10.83 L20.75 10.48 L20.75 7.52 L23.02 7.17 L23.19 6.77 L21.83 4.92 L23.92 2.83 L25.77 4.19 L26.17 4.02 L26.52 1.75 L29.48 1.75 L29.83 4.02 L30.23 4.19 L32.08 2.83 L34.17 4.92 L32.81 6.77Z" fill="#6a9be0" stroke="#2f5da8" stroke-width="0.9" stroke-linejoin="round"/><circle cx="28" cy="9" r="2.6" fill="#fff"/><circle cx="28" cy="9" r="2.6" fill="none" stroke="#2f5da8" stroke-width="0.9"/></svg>
<div class="r" style="left:1660.5px;top:364px;width:111.5px;height:23.5px;background:#dddddd;border:1px solid #cfcfcf;box-sizing:border-box"></div>
<div class="t" style="left:1660.5px;width:111.5px;text-align:center;top:368.75px;font-size:12px;color:#222;transform:scaleX(0.93)">Select PV areas</div>
<div class="r" style="left:1660.5px;top:390.5px;width:111.5px;height:23.5px;background:#dddddd;border:1px solid #cfcfcf;box-sizing:border-box"></div>
<div class="t" style="left:1660.5px;width:111.5px;text-align:center;top:395.25px;font-size:12px;color:#222;transform:scaleX(0.93)">Refresh</div>
<div class="r" style="left:1660.5px;top:556.5px;width:111.5px;height:23.5px;background:#dddddd;border:1px solid #cfcfcf;box-sizing:border-box"></div>
<div class="t" style="left:1660.5px;width:111.5px;text-align:center;top:561.25px;font-size:12px;color:#222;transform:scaleX(0.93)">Export to CAD</div>
<div class="r" style="left:1660.5px;top:583.5px;width:111.5px;height:23.5px;background:#dddddd;border:1px solid #cfcfcf;box-sizing:border-box"></div>
<div class="t" style="left:1660.5px;width:111.5px;text-align:center;top:588.25px;font-size:12px;color:#222;transform:scaleX(0.93)">Frame information</div>
<div class="r" style="left:1660.5px;top:610.5px;width:111.5px;height:23.5px;background:#dddddd;border:1px solid #cfcfcf;box-sizing:border-box"></div>
<div class="t" style="left:1660.5px;width:111.5px;text-align:center;top:615.25px;font-size:12px;color:#222;transform:scaleX(0.93)">Show Row &amp; pitch</div>
<div class="r" style="left:1660.5px;top:637.5px;width:111.5px;height:23.5px;background:#dddddd;border:1px solid #cfcfcf;box-sizing:border-box"></div>
<div class="t" style="left:1660.5px;width:111.5px;text-align:center;top:642.25px;font-size:12px;color:#222;transform:scaleX(0.93)">Hide Row &amp; pitch</div>
<svg class="r" style="left:1379px;top:687px" width="20" height="30" viewBox="0 0 20 30"><path d="M1.5 1.5 V23 L6.5 18 L10.5 27 L14 25.5 L10 17 H17Z" fill="#fff" stroke="#111" stroke-width="1.3" stroke-linejoin="round"/></svg>
<div class="r" style="left:759px;top:924px;width:844px;height:26.5px;background:#fff;border:1px solid #dcdcdc;border-radius:3px;box-sizing:border-box"></div>
<div class="r" style="left:759px;top:924px;width:59px;height:26.5px;background:#e3e3e3;border-radius:3px 0 0 3px"></div>
<svg class="r" style="left:762px;top:927px" width="90" height="22" viewBox="0 0 90 22"><g fill="#888"><rect x="1" y="1" width="1.5" height="1.5"/><rect x="4" y="1" width="1.5" height="1.5"/><rect x="1" y="5" width="1.5" height="1.5"/><rect x="4" y="5" width="1.5" height="1.5"/><rect x="1" y="9" width="1.5" height="1.5"/><rect x="4" y="9" width="1.5" height="1.5"/><rect x="1" y="13" width="1.5" height="1.5"/><rect x="4" y="13" width="1.5" height="1.5"/><rect x="1" y="17" width="1.5" height="1.5"/><rect x="4" y="17" width="1.5" height="1.5"/></g><path d="M13.5 6 L21.5 14 M21.5 6 L13.5 14" stroke="#777" stroke-width="1.8"/><path d="M35.5 18 L43.5 10 C42.5 7.5 43 5 45 3.5 C46.5 2.5 48.5 2.3 50 3 L47 6 L48 8 L50 9 L53 6 C53.7 7.5 53.5 9.5 52.5 11 C51 13 48.5 13.5 46 12.5 L38 20.5 C37.3 21.2 36.2 21.2 35.5 20.5 C34.8 19.8 34.8 18.7 35.5 18Z" fill="#f2f2f2" stroke="#a0a0a0" stroke-width="1.1" stroke-linejoin="round"/><rect x="60.5" y="4.5" width="15" height="12" fill="#fff" stroke="#888"/><rect x="60.5" y="4.5" width="15" height="2.5" fill="#888"/><path d="M62 10 L64 11.5 L62 13 M65 13 H68" stroke="#888" fill="none" stroke-width="0.8"/><path d="M78 8 H85 L81.5 12Z" fill="#777"/></svg>
<div class="t" style="left:855px;top:929.5px;font-family:'Liberation Mono',monospace;font-style:italic;font-size:12px;color:#a3a3a3">Type a command</div>
<svg class="r" style="left:1591px;top:933px" width="8" height="5" viewBox="0 0 8 5"><path d="M0 5 L4 0 L8 5Z" fill="#666"/></svg>
<div class="r" style="left:0px;top:973px;width:1918px;height:31px;background:#d9d9d9"></div>
<div class="r" style="left:0px;top:1002px;width:1918px;height:2px;background:#bdbdbd"></div>
<svg class="r" style="left:0;top:973px" width="300" height="30"><path d="M40.5 23.3 L49.3 0.6 L109.5 0.6 L100 23.3Z" fill="#f5f5f5"/><path d="M175 6 L170 20 M242 6 L237 20 M281 6 L276 20" stroke="#b3b3b3"/></svg>
<svg class="r" style="left:14px;top:979px" width="17" height="13" viewBox="0 0 17 13"><rect y="0" width="16.5" height="2" fill="#555"/><rect y="5" width="16.5" height="2" fill="#555"/><rect y="10" width="16.5" height="2" fill="#555"/></svg>
<div class="t " style="left:56.5px;top:979.5px;font-size:12px;color:#333;font-weight:bold;">Model</div>
<div class="t " style="left:116.5px;top:979.5px;font-size:12px;color:#444;font-weight:normal;">Layout1</div>
<div class="t " style="left:182.5px;top:979.5px;font-size:12px;color:#444;font-weight:normal;">Layout2</div>
<svg class="r" style="left:250px;top:978px" width="15" height="15" viewBox="0 0 15 15"><path d="M7.5 1 V14 M1 7.5 H14" stroke="#555" stroke-width="1.6"/></svg>
<div class="r" style="left:1142px;top:976px;width:180px;height:22.5px;background:#f4f4f4"></div>
<div class="r" style="left:1326px;top:976px;width:48px;height:22.5px;background:#f4f4f4"></div>
<div class="r" style="left:1378px;top:976px;width:61px;height:22.5px;background:#f4f4f4"></div>
<div class="r" style="left:1443px;top:976px;width:101.5px;height:22.5px;background:#f4f4f4"></div>
<div class="r" style="left:1546px;top:976px;width:61px;height:22.5px;background:#f4f4f4"></div>
<div class="r" style="left:1611.5px;top:976px;width:101.5px;height:22.5px;background:#f4f4f4"></div>
<div class="r" style="left:1717px;top:976px;width:38px;height:22.5px;background:#f4f4f4"></div>
<div class="r" style="left:1757px;top:976px;width:22px;height:22.5px;background:#f4f4f4"></div>
<div class="r" style="left:1783px;top:976px;width:22.5px;height:22.5px;background:#f4f4f4"></div>
<div class="r" style="left:1810px;top:976px;width:53px;height:22.5px;background:#f4f4f4"></div>
<div class="r" style="left:1867px;top:976px;width:22.5px;height:22.5px;background:#f4f4f4"></div>
<div class="r" style="left:1893.5px;top:976px;width:24.5px;height:22.5px;background:#f4f4f4"></div>
<div class="t " style="left:1170px;top:980px;font-size:12px;color:#333;font-weight:normal;letter-spacing:-0.15px">428.4706, 660.0604, 0.0000</div>
<div class="t " style="left:1330px;top:980px;font-size:12px;color:#333;font-weight:normal;">MODEL</div>
<div class="r" style="left:1546.5px;top:976.5px;width:21px;height:22px;background:#cce4f7;border:1px solid #8ab8e3;box-sizing:border-box"></div>
<div class="r" style="left:1569px;top:976.5px;width:21.5px;height:22px;background:#cce4f7;border:1px solid #8ab8e3;box-sizing:border-box"></div>
<div class="r" style="left:1612px;top:976.5px;width:21px;height:22px;background:#cce4f7;border:1px solid #8ab8e3;box-sizing:border-box"></div>
<svg class="r" style="left:0;top:0" width="1918" height="1004" viewBox="0 0 1918 1004"><g stroke="#777" stroke-width="1.2"><path d="M1385 980 V994 M1389 980 V994 M1393 980 V994 M1382 983.5 H1396.5 M1382 987 H1396.5 M1382 990.5 H1396.5"/></g><g fill="#555"><rect x="1406.0" y="981.0" width="2" height="2"/><rect x="1406.0" y="985.6" width="2" height="2"/><rect x="1406.0" y="990.2" width="2" height="2"/><rect x="1410.6" y="981.0" width="2" height="2"/><rect x="1410.6" y="985.6" width="2" height="2"/><rect x="1410.6" y="990.2" width="2" height="2"/><rect x="1415.2" y="981.0" width="2" height="2"/><rect x="1415.2" y="985.6" width="2" height="2"/><rect x="1415.2" y="990.2" width="2" height="2"/></g><path d="M1427.5 985 h7.5 l-3.75 4z" fill="#555"/><path d="M1447 980 V994.5 H1462" fill="none" stroke="#777" stroke-width="1.2"/><rect x="1447" y="990" width="3.5" height="4.5" fill="none" stroke="#777" stroke-width="1"/><circle cx="1475.6" cy="987.5" r="6" fill="none" stroke="#888" stroke-width="1.2"/><path d="M1475 987.5 H1485 M1475 987.5 L1481 980.5" stroke="#888" stroke-width="1.1"/><path d="M1492.5 985 h7.5 l-3.75 4z" fill="#555"/><path d="M1510 981 L1522.5 994" stroke="#e06060" stroke-width="1.2"/><path d="M1516.3 980 V995" stroke="#3cb45a" stroke-width="1.1" stroke-dasharray="1.5 1"/><circle cx="1516.3" cy="987.5" r="1.4" fill="#fff" stroke="#555" stroke-width="0.8"/><path d="M1532.5 985 h7.5 l-3.75 4z" fill="#555"/><path d="M1550 992.5 L1560 983 M1550 992.5 H1565" fill="none" stroke="#555" stroke-width="1.2"/><circle cx="1555" cy="987.8" r="1.3" fill="#222"/><rect x="1572.5" y="982.5" width="13" height="11" fill="none" stroke="#666" stroke-width="1.2"/><rect x="1571" y="980" width="3.5" height="3.5" fill="#cce4f7" stroke="#666" stroke-width="1"/><path d="M1595.5 985 h7.5 l-3.75 4z" fill="#555"/><path d="M1621.5 980.5 L1623.8 988.5 L1627.5 994 L1621.5 991 L1615.5 994 L1619.2 988.5Z" fill="#333" stroke="#333" stroke-width="0.6" stroke-linejoin="round"/><circle cx="1627.5" cy="983" r="2" fill="none" stroke="#555" stroke-width="0.9"/><path d="M1643.5 980.5 L1645.8 988.5 L1649.5 994 L1643.5 991 L1637.5 994 L1641.2 988.5Z" fill="#555" stroke="#555" stroke-width="0.6" stroke-linejoin="round"/><path d="M1649.5 980 L1647.5 983.5 H1650 L1648 986.5" fill="none" stroke="#555" stroke-width="0.9"/><path d="M1667.5 980.5 L1669.8 988.5 L1673.5 994 L1667.5 991 L1661.5 994 L1665.2 988.5Z" fill="#555" stroke="#555" stroke-width="0.6" stroke-linejoin="round"/><path d="M1701.5 985.5 h7 l-3.5 4z" fill="#555"/><path d="M1732.21 985.15 L1734.56 985.40 L1734.56 988.20 L1732.21 988.45 L1732.06 988.82 L1733.54 990.66 L1731.56 992.64 L1729.72 991.16 L1729.35 991.31 L1729.10 993.66 L1726.30 993.66 L1726.05 991.31 L1725.68 991.16 L1723.84 992.64 L1721.86 990.66 L1723.34 988.82 L1723.19 988.45 L1720.84 988.20 L1720.84 985.40 L1723.19 985.15 L1723.34 984.78 L1721.86 982.94 L1723.84 980.96 L1725.68 982.44 L1726.05 982.29 L1726.30 979.94 L1729.10 979.94 L1729.35 982.29 L1729.72 982.44 L1731.56 980.96 L1733.54 982.94 L1732.06 984.78Z" fill="#555" stroke="#555" stroke-width="0.6" stroke-linejoin="round"/><circle cx="1727.7" cy="986.8" r="2.2" fill="#f4f4f4"/><path d="M1743.5 985.5 h7.5 l-3.75 4z" fill="#555"/><path d="M1767.5 980 V995 M1760 987.5 H1775" stroke="#555" stroke-width="1.8"/><rect x="1787" y="980.5" width="5" height="5" fill="none" stroke="#777" stroke-width="1"/><circle cx="1798.5" cy="988" r="3.5" fill="none" stroke="#777" stroke-width="1"/><path d="M1790 990.5 L1793 995 H1787Z" fill="none" stroke="#777" stroke-width="1"/><path d="M1816 980.5 H1825 L1829 984 V991 H1816Z" fill="#1f5fb0"/><path d="M1817 982 L1828 990 M1819 989 L1826 982" stroke="#8fc0f0" stroke-width="0.7"/><rect x="1815.5" y="988.5" width="8" height="5" fill="#f5a300"/><path d="M1824 992 L1826.5 994.5 L1831 989.5" fill="none" stroke="#3cb45a" stroke-width="1.3"/><rect x="1841.5" y="980.5" width="14.5" height="12" fill="none" stroke="#777" stroke-width="1"/><path d="M1842 982 C1846 984 1848 990 1852 993" fill="none" stroke="#555" stroke-width="0.9"/><circle cx="1844.5" cy="982.5" r="1" fill="#5fb0ee"/><path d="M1853.5 987 L1857.5 994.5 H1849.5Z" fill="#f08a30"/><rect x="1871.5" y="982" width="14.5" height="11" fill="none" stroke="#666" stroke-width="1.1"/><path d="M1880 986 L1884 983.5 M1884 983.5 H1881.5 M1884 983.5 V986 M1877.5 989 L1873.5 991.5 M1873.5 991.5 H1876 M1873.5 991.5 V989" stroke="#555" stroke-width="1"/><path d="M1897 981 H1913 M1897 987 H1913 M1897 993 H1913" stroke="#444" stroke-width="1.7"/></svg>
<svg class="r" style="left:1684px;top:978px" width="16" height="16" viewBox="0 0 16 16"><text x="0.5" y="12.5" font-family="Liberation Sans" font-size="12.5" fill="#444" textLength="11.5" lengthAdjust="spacingAndGlyphs">1:1</text></svg>
</body></html>
